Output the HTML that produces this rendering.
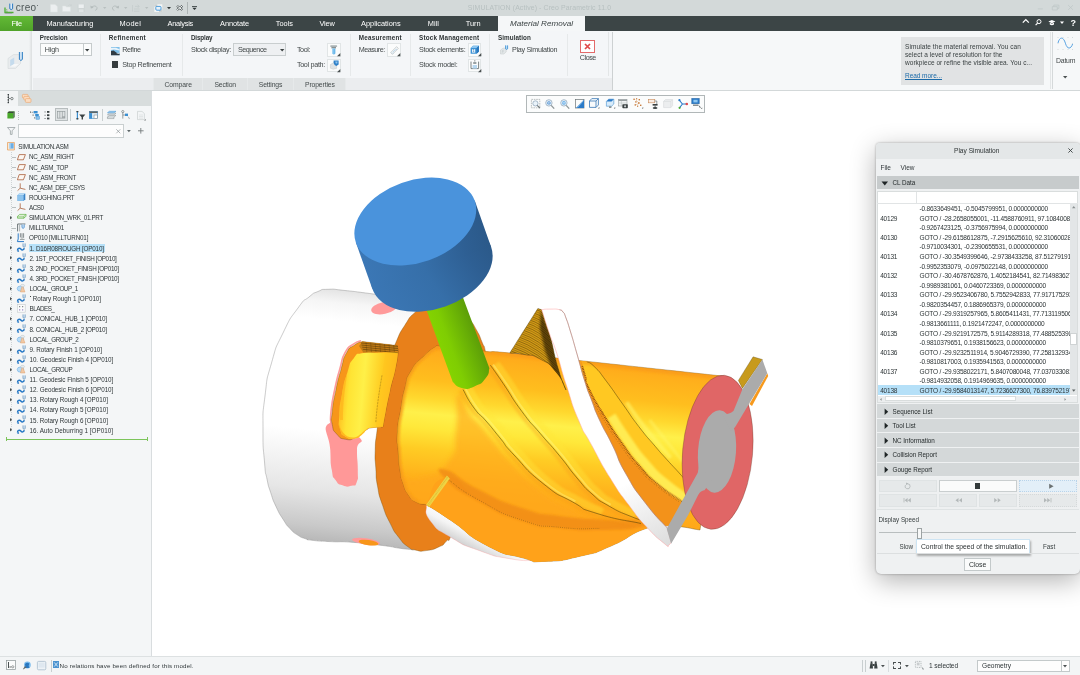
<!DOCTYPE html>
<html lang="en"><head><meta charset="utf-8"><title>Creo Parametric - SIMULATION</title>
<style>
html,body{margin:0;padding:0;}
body{width:1080px;height:675px;overflow:hidden;position:relative;background:#fff;font-family:"Liberation Sans",sans-serif;}
.t{position:absolute;white-space:nowrap;line-height:1.15;}
.r{position:absolute;box-sizing:border-box;}
svg{position:absolute;overflow:visible;}
</style></head><body>
<div id="app" style="position:absolute;left:0;top:0;width:1080px;height:675px;will-change:transform;">

<div class="r" style="left:0px;top:0px;width:1080px;height:16px;background:#d3d9d9;"></div>
<div class="t" style="left:15.8px;top:1.60px;font-size:10px;color:#4d5657;letter-spacing:0.287px;">creo</div>
<div class="t" style="left:467.8px;top:4.09px;font-size:6.9px;color:#b7c0c0;letter-spacing:0.127px;">SIMULATION (Active) - Creo Parametric 11.0</div>
<svg width="11" height="11" viewBox="0 0 11 11" style="left:3.5px;top:2.5px"><path d="M1,4.5 L1,9.5 L9.5,9.5" fill="none" stroke="#4fae35" stroke-width="1.3"/><path d="M1.2,10.3 L8,10.3" stroke="#8a9293" stroke-width="0.6"/><path d="M5.8,0.6 L5.8,5.8 Q7.2,7.4 8.6,5.8 L8.6,0.6" fill="#dbe9f5" stroke="#2a78c0" stroke-width="1"/><text x="1.8" y="8.6" font-size="4" fill="#4fae35" font-family="Liberation Sans, sans-serif">1</text></svg>
<div class="r" style="left:37px;top:5.2px;width:1.2px;height:1.2px;border-radius:1px;background:#4d5657"></div>
<svg width="8" height="8.5" viewBox="0 0 8 8.5" style="left:50px;top:3.8px"><path d="M0.5,0.4 L5,0.4 L7.4,2.6 L7.4,8 L0.5,8 Z" fill="#eceff0" stroke="#dfe4e4" stroke-width="0.5"/></svg>
<svg width="10.5" height="8" viewBox="0 0 10.5 8" style="left:62px;top:3.8px"><path d="M0.5,2 L3.6,2 L4.4,3 L8.4,3 L8.4,7.6 L0.5,7.6 Z" fill="#eceff0" stroke="#dde2e2" stroke-width="0.5"/><path d="M6,1.8 Q7.4,0.2 9.4,0.8 M9.6,0.5 L9.4,2 L8,1.3" stroke="#c9d0d0" stroke-width="0.6" fill="none"/></svg>
<svg width="8.5" height="8.5" viewBox="0 0 8.5 8.5" style="left:76.8px;top:3.8px"><path d="M0.4,0.4 L8,0.4 L8,8 L0.4,8 Z" fill="#cfd5d5"/><rect x="1.6" y="0.4" width="5.2" height="3.6" fill="#eceff0"/><rect x="1.9" y="5.4" width="4.6" height="2.6" fill="#dfe4e4"/></svg>
<svg width="8.5" height="6" viewBox="0 0 8.5 6" style="left:90px;top:5.2px"><path d="M1.2,2.4 Q5.4,-0.6 7,2.6 Q7.6,4.6 5.2,5.4" fill="none" stroke="#b3bbbb" stroke-width="0.9"/><path d="M0.4,0.6 L0.8,3.6 L3.6,2.8 Z" fill="#b3bbbb"/></svg>
<svg width="3.4" height="2" viewBox="0 0 3.4 2" style="left:103px;top:7px"><path d="M0,0 L3.4,0 L1.7,2 Z" fill="#b9c0c0"/></svg>
<svg width="8.5" height="6" viewBox="0 0 8.5 6" style="left:111px;top:5.2px"><path d="M7.3,2.4 Q3.1,-0.6 1.5,2.6 Q0.9,4.6 3.3,5.4" fill="none" stroke="#b3bbbb" stroke-width="0.9"/><path d="M8.1,0.6 L7.7,3.6 L4.9,2.8 Z" fill="#b3bbbb"/></svg>
<svg width="3.4" height="2" viewBox="0 0 3.4 2" style="left:124px;top:7px"><path d="M0,0 L3.4,0 L1.7,2 Z" fill="#b9c0c0"/></svg>
<svg width="8.5" height="8.5" viewBox="0 0 8.5 8.5" style="left:132px;top:3.5px"><g stroke="#c3caca" stroke-width="0.7" fill="none"><path d="M0.5,1 L0.5,7.5 M2,5 L7.5,5 M2,7.2 L7.5,7.2 M3,2.4 L7,2.4 M5.6,0.6 L7.2,2.4 L5.6,4"/></g></svg>
<svg width="3.4" height="2" viewBox="0 0 3.4 2" style="left:145px;top:7px"><path d="M0,0 L3.4,0 L1.7,2 Z" fill="#b9c0c0"/></svg>
<svg width="9" height="8.5" viewBox="0 0 9 8.5" style="left:153.5px;top:4px"><rect x="0.3" y="0.3" width="8" height="7.6" fill="#f4f6f6"/><rect x="0.3" y="0.3" width="3" height="2.4" fill="#c9cfcf"/><rect x="5" y="5.6" width="3.3" height="2.3" fill="#c9cfcf"/><rect x="1.8" y="2.4" width="5.2" height="3.8" rx="1" fill="#e8f2fa" stroke="#3d93d6" stroke-width="0.9"/></svg>
<svg width="4" height="2.2" viewBox="0 0 4 2.2" style="left:166.5px;top:7px"><path d="M0,0 L4,0 L2,2.2 Z" fill="#2f3738"/></svg>
<svg width="7.5" height="5.8" viewBox="0 0 7.5 5.8" style="left:176px;top:5.2px"><path d="M1,0.8 L6.4,5 M6.4,0.8 L1,5" stroke="#4a5253" stroke-width="2.1" fill="none"/><path d="M1,0.8 L6.4,5 M6.4,0.8 L1,5" stroke="#f4f6f6" stroke-width="1" fill="none"/></svg>
<div class="r" style="left:186.6px;top:1.5px;width:1px;height:12px;background:#aeb5b5"></div>
<svg width="5" height="4" viewBox="0 0 5 4" style="left:191.5px;top:5.8px"><rect x="0" y="0" width="5" height="0.8" fill="#2f3738"/><path d="M0.3,1.7 L4.7,1.7 L2.5,3.9 Z" fill="#2f3738"/></svg>
<svg width="38" height="9" viewBox="0 0 38 9" style="left:1037px;top:3px"><g stroke="#bdc5c5" stroke-width="0.7" fill="none"><path d="M0.8,5.9 L5.8,5.9"/><path d="M15.3,3.6 L20.3,3.6 L20.3,7 L15.3,7 Z M16.8,3.6 L16.8,2.1 L21.9,2.1 L21.9,5.4 L20.3,5.4"/><path d="M31.2,2.2 L36,6.8 M36,2.2 L31.2,6.8"/></g></svg>
<div class="r" style="left:0px;top:15.8px;width:1080px;height:15px;background:#3c4546;"></div>
<div class="r" style="left:0px;top:15.8px;width:33px;height:15px;background:linear-gradient(#63ba36,#4fa229);"></div>
<div class="t" style="left:11.4px;top:19.79px;font-size:7.4px;color:#fff;letter-spacing:-0.431px;">File</div>
<div class="t" style="left:46.4px;top:19.79px;font-size:7.4px;color:#fff;letter-spacing:0.008px;">Manufacturing</div>
<div class="t" style="left:119.6px;top:19.79px;font-size:7.4px;color:#fff;letter-spacing:0.289px;">Model</div>
<div class="t" style="left:167.6px;top:19.79px;font-size:7.4px;color:#fff;letter-spacing:-0.269px;">Analysis</div>
<div class="t" style="left:220px;top:19.79px;font-size:7.4px;color:#fff;letter-spacing:-0.053px;">Annotate</div>
<div class="t" style="left:275.8px;top:19.79px;font-size:7.4px;color:#fff;letter-spacing:-0.015px;">Tools</div>
<div class="t" style="left:319.4px;top:19.79px;font-size:7.4px;color:#fff;letter-spacing:-0.152px;">View</div>
<div class="t" style="left:361.1px;top:19.79px;font-size:7.4px;color:#fff;letter-spacing:-0.034px;">Applications</div>
<div class="t" style="left:427.8px;top:19.79px;font-size:7.4px;color:#fff;letter-spacing:0.001px;">Mill</div>
<div class="t" style="left:465.8px;top:19.79px;font-size:7.4px;color:#fff;letter-spacing:-0.035px;">Turn</div>
<div class="r" style="left:498px;top:15.8px;width:87px;height:15.2px;background:#f5f7f8;"></div>
<div class="t" style="left:510px;top:18.66px;font-size:8.1px;color:#3a4243;font-style:italic;letter-spacing:0.005px;">Material Removal</div>
<svg width="56" height="9" viewBox="0 0 56 9" style="left:1022px;top:18px"><g fill="none" stroke="#fff">
<path d="M0.8,4.6 L3.8,1.6 L6.8,4.6" stroke-width="1.3"/>
<circle cx="17" cy="3.6" r="2" stroke-width="1"/><path d="M15.6,5.1 L13.6,7.2" stroke-width="1.2"/>
</g><g fill="#fff"><path d="M26.4,3.6 L29.9,2 L33.4,3.6 L29.9,5.2 Z"/><path d="M27.8,4.8 L27.8,6.6 Q29.9,7.8 32,6.6 L32,4.8 L29.9,5.8 Z"/>
<path d="M38,3.4 L42,3.4 L40,6 Z"/></g>
<text x="48.6" y="7.6" font-size="9" font-weight="bold" fill="#fff" font-family="Liberation Sans, sans-serif">?</text></svg>
<div class="r" style="left:0px;top:30.8px;width:1080px;height:59.2px;background:#f4f6f8;"></div>
<div class="r" style="left:0px;top:30.8px;width:32px;height:59.2px;background:linear-gradient(90deg,#f1f3f4 0,#f1f3f4 29px,#dfe2e3 31.5px,#e9ecee 32px);"></div>
<div class="r" style="left:32.5px;top:78px;width:580px;height:12px;background:#ebedef;"></div>
<div class="r" style="left:152.5px;top:78px;width:192.5px;height:12px;background:#e0e3e4;"></div>
<div class="r" style="left:152.5px;top:78px;width:1px;height:12px;background:#e6e9ea;"></div>
<div class="r" style="left:202.0px;top:78px;width:1px;height:12px;background:#e6e9ea;"></div>
<div class="r" style="left:247.0px;top:78px;width:1px;height:12px;background:#e6e9ea;"></div>
<div class="r" style="left:293.0px;top:78px;width:1px;height:12px;background:#e6e9ea;"></div>
<div class="r" style="left:344.5px;top:78px;width:1px;height:12px;background:#e6e9ea;"></div>
<div class="r" style="left:0px;top:89.8px;width:1080px;height:1.2px;background:#d3d8d9;"></div>
<div class="t" style="left:164.4px;top:80.65px;font-size:6.8px;color:#444b4c;letter-spacing:-0.067px;">Compare</div>
<div class="t" style="left:214.4px;top:80.65px;font-size:6.8px;color:#444b4c;letter-spacing:-0.155px;">Section</div>
<div class="t" style="left:258.75px;top:80.65px;font-size:6.8px;color:#444b4c;letter-spacing:-0.134px;">Settings</div>
<div class="t" style="left:305px;top:80.65px;font-size:6.8px;color:#444b4c;letter-spacing:-0.124px;">Properties</div>
<div class="t" style="left:39.75px;top:33.76px;font-size:6.3px;color:#2d3334;font-weight:bold;letter-spacing:-0.068px;">Precision</div>
<div class="t" style="left:108.75px;top:33.76px;font-size:6.3px;color:#2d3334;font-weight:bold;letter-spacing:0.294px;">Refinement</div>
<div class="t" style="left:190.9px;top:33.76px;font-size:6.3px;color:#2d3334;font-weight:bold;letter-spacing:-0.116px;">Display</div>
<div class="t" style="left:358.75px;top:33.76px;font-size:6.3px;color:#2d3334;font-weight:bold;letter-spacing:0.226px;">Measurement</div>
<div class="t" style="left:419px;top:33.76px;font-size:6.3px;color:#2d3334;font-weight:bold;letter-spacing:0.187px;">Stock Management</div>
<div class="t" style="left:497.9px;top:33.76px;font-size:6.3px;color:#2d3334;font-weight:bold;letter-spacing:0.090px;">Simulation</div>
<div class="r" style="left:99.5px;top:34px;width:1px;height:41.5px;background:#e6e9ea;"></div>
<div class="r" style="left:182.0px;top:34px;width:1px;height:41.5px;background:#e6e9ea;"></div>
<div class="r" style="left:349.9px;top:34px;width:1px;height:41.5px;background:#e6e9ea;"></div>
<div class="r" style="left:409.75px;top:34px;width:1px;height:41.5px;background:#e6e9ea;"></div>
<div class="r" style="left:489.1px;top:34px;width:1px;height:41.5px;background:#e6e9ea;"></div>
<div class="r" style="left:567.0px;top:34px;width:1px;height:41.5px;background:#e6e9ea;"></div>
<div class="r" style="left:608.3px;top:32px;width:1px;height:44px;background:#e3e6e7;"></div>
<div class="r" style="left:612px;top:32px;width:1px;height:57.5px;background:#cdd1d2;"></div>
<div class="r" style="left:613px;top:30.8px;width:467px;height:59.2px;background:#f6f8f9;"></div>
<div class="r" style="left:40px;top:43.1px;width:52.1px;height:13.4px;background:#fbfcfc;border:1px solid #c6cbcc;"></div>
<div class="r" style="left:83px;top:43.1px;width:1px;height:13.4px;background:#c6cbcc;"></div>
<div class="t" style="left:44.75px;top:45.81px;font-size:7.2px;color:#424849;letter-spacing:-0.202px;">High</div>
<svg width="4.4" height="2.6" viewBox="0 0 4.4 2.6" style="left:85.4px;top:48.8px"><path d="M0,0 L4.4,0 L2.2,2.6 Z" fill="#3a4041"/></svg>
<div class="t" style="left:122.25px;top:45.81px;font-size:7.2px;color:#424849;letter-spacing:-0.402px;">Refine</div>
<div class="t" style="left:122.25px;top:60.81px;font-size:7.2px;color:#424849;letter-spacing:-0.292px;">Stop Refinement</div>
<div class="r" style="left:111.6px;top:61.2px;width:6.6px;height:6.4px;background:#353c3e;"></div>
<div class="t" style="left:190.9px;top:45.81px;font-size:7.2px;color:#424849;letter-spacing:-0.309px;">Stock display:</div>
<div class="r" style="left:233.1px;top:43.1px;width:53.4px;height:13.4px;background:#eef0f2;border:1px solid #c9cecf;"></div>
<div class="t" style="left:237.9px;top:45.81px;font-size:7.2px;color:#424849;letter-spacing:-0.466px;">Sequence</div>
<svg width="4.4" height="2.6" viewBox="0 0 4.4 2.6" style="left:279.8px;top:48.8px"><path d="M0,0 L4.4,0 L2.2,2.6 Z" fill="#3a4041"/></svg>
<div class="t" style="left:296.9px;top:45.81px;font-size:7.2px;color:#424849;letter-spacing:-0.422px;">Tool:</div>
<div class="t" style="left:296.9px;top:60.81px;font-size:7.2px;color:#424849;letter-spacing:-0.312px;">Tool path:</div>
<div class="t" style="left:358.75px;top:45.81px;font-size:7.2px;color:#424849;letter-spacing:-0.500px;">Measure:</div>
<div class="t" style="left:419px;top:45.81px;font-size:7.2px;color:#424849;letter-spacing:-0.322px;">Stock elements:</div>
<div class="t" style="left:419px;top:60.81px;font-size:7.2px;color:#424849;letter-spacing:-0.260px;">Stock model:</div>
<div class="t" style="left:511.9px;top:45.81px;font-size:7.2px;color:#424849;letter-spacing:-0.282px;">Play Simulation</div>
<div class="t" style="left:579.75px;top:54.11px;font-size:7.2px;color:#424849;letter-spacing:-0.442px;">Close</div>
<div class="r" style="left:327.25px;top:43.3px;width:13.3px;height:13.3px;background:#fbfcfc;border:1px solid #e1e5e6;"></div>
<svg width="3.3" height="3.3" viewBox="0 0 3.3 3.3" style="left:337.25px;top:53.3px"><path d="M3.3,0 L3.3,3.3 L0,3.3 Z" fill="#4a5051"/></svg>
<div class="r" style="left:327.25px;top:58.5px;width:13.3px;height:13.3px;background:#fbfcfc;border:1px solid #e1e5e6;"></div>
<svg width="3.3" height="3.3" viewBox="0 0 3.3 3.3" style="left:337.25px;top:68.5px"><path d="M3.3,0 L3.3,3.3 L0,3.3 Z" fill="#4a5051"/></svg>
<div class="r" style="left:387.25px;top:43.3px;width:13.3px;height:13.3px;background:#fbfcfc;border:1px solid #e1e5e6;"></div>
<svg width="3.3" height="3.3" viewBox="0 0 3.3 3.3" style="left:397.25px;top:53.3px"><path d="M3.3,0 L3.3,3.3 L0,3.3 Z" fill="#4a5051"/></svg>
<div class="r" style="left:467.6px;top:43.3px;width:13.3px;height:13.3px;background:#fbfcfc;border:1px solid #e1e5e6;"></div>
<svg width="3.3" height="3.3" viewBox="0 0 3.3 3.3" style="left:477.6px;top:53.3px"><path d="M3.3,0 L3.3,3.3 L0,3.3 Z" fill="#4a5051"/></svg>
<div class="r" style="left:467.6px;top:58.5px;width:13.3px;height:13.3px;background:#fbfcfc;border:1px solid #e1e5e6;"></div>
<svg width="3.3" height="3.3" viewBox="0 0 3.3 3.3" style="left:477.6px;top:68.5px"><path d="M3.3,0 L3.3,3.3 L0,3.3 Z" fill="#4a5051"/></svg>
<div class="r" style="left:580.25px;top:40px;width:14.75px;height:12.9px;background:#fff;border:1px solid #e36a6a;"></div>
<svg width="18" height="19" viewBox="0 0 18 19" style="left:6.5px;top:50.5px"><path d="M1,7.5 L6.5,3.6 L13.5,3.6 L13.5,12.5 L8.5,17.5 L1,17.5 Z" fill="#e9ecee" stroke="#cfd4d6" stroke-width="0.5"/>
<path d="M3.2,9 L7.2,6.4 L7.2,13 L3.2,15.2 Z" fill="#c5dbed"/><path d="M7.2,13 L11.8,13 L8.2,15.8 L3.2,15.4 Z" fill="#f7f8f9"/>
<path d="M12.4,1 L12.4,8.4 Q13.9,10.6 15.4,8.4 L15.4,1" fill="#cfe3f4" stroke="#1f74bd" stroke-width="0.9"/></svg>
<svg width="8.6" height="8.2" viewBox="0 0 8.6 8.2" style="left:111px;top:46.5px"><rect x="0" y="0" width="8.6" height="8.2" fill="#7fbfe9"/><path d="M0,0.8 L5,0.8 L8.6,2.2 L8.6,3.4 L3,2.6 L0,3 Z" fill="#eaf4fb"/><path d="M0,4 L2.6,3.6 L6,6 L8.6,6.6 L8.6,8.2 L0,8.2 Z" fill="#2f3b44"/><path d="M5,6.4 L8.6,5.4 L8.6,7 Z" fill="#c9d4db"/></svg>
<svg width="8" height="10.5" viewBox="0 0 8 10.5" style="left:330px;top:45px"><rect x="0.2" y="0.3" width="7" height="1.8" rx="0.8" fill="#aab2b4"/><rect x="1.4" y="2.1" width="4.6" height="1.3" fill="#7d8688"/><path d="M2.2,3.4 L5.4,3.4 L5.4,8.6 Q3.8,10.4 2.2,8.6 Z" fill="#6bb8ea"/><rect x="2.2" y="3.4" width="1.1" height="5.6" fill="#a8d6f4"/></svg>
<svg width="9.5" height="9.5" viewBox="0 0 9.5 9.5" style="left:329.5px;top:60.2px"><path d="M0.4,4.6 L3.4,2.8 L6.6,3.4 L6.6,8.4 L3.2,9.2 L0.4,8.2 Z" fill="#dfe3e5" stroke="#b9bfc1" stroke-width="0.4"/><path d="M3.6,0.6 L8.6,0.6 L8.6,4.4 L6.4,6 L4.6,5 L3.6,3 Z" fill="#2f80c8"/><path d="M5.2,1.4 L7.6,1.4 L7.2,3.6 L5.8,3.6 Z" fill="#8ec4ee"/></svg>
<svg width="9" height="9" viewBox="0 0 9 9" style="left:389.5px;top:45.5px"><path d="M0.6,6.6 L6.6,0.6 L8.4,2.4 L2.4,8.4 Z" fill="#f1f3f4" stroke="#a9b0b2" stroke-width="0.5"/><path d="M2,6.6 L2.8,7.4 M3.2,5.4 L4,6.2 M4.4,4.2 L5.2,5 M5.6,3 L6.4,3.8" stroke="#5aa6df" stroke-width="0.5"/></svg>
<svg width="9.5" height="9.5" viewBox="0 0 9.5 9.5" style="left:469.6px;top:45px"><path d="M0.6,3 L3,0.8 L9,0.8 L9,6.4 L6.6,8.8 L0.6,8.8 Z" fill="#3d93d6"/><path d="M0.6,3 L3,0.8 L9,0.8 L6.6,3 Z" fill="#8cc6f0"/><path d="M6.6,3 L9,0.8 L9,6.4 L6.6,8.8 Z" fill="#2a78bd"/><rect x="2" y="4.2" width="3.2" height="3.4" fill="#e8f3fb"/><text x="2.5" y="7.3" font-size="3.6" fill="#1f5f9d" font-family="Liberation Sans, sans-serif">1</text></svg>
<svg width="9.5" height="9.5" viewBox="0 0 9.5 9.5" style="left:469.6px;top:60.2px"><path d="M1,1.6 L1,8.6 L8.6,8.6 L8.6,1.6" fill="none" stroke="#6d7678" stroke-width="0.9"/><rect x="2.6" y="5" width="4.4" height="3.6" fill="#b8d8f0"/><rect x="3.2" y="2" width="3.2" height="2" fill="#9aa2a4"/><path d="M4.8,0.2 L4.8,1.6" stroke="#6d7678" stroke-width="0.8"/></svg>
<svg width="8.5" height="9.5" viewBox="0 0 8.5 9.5" style="left:500px;top:45.3px"><path d="M0.5,5 L3,3.2 L6.2,3.2 L6.2,7 L3.8,9 L0.5,9 Z" fill="#e3e7e9" stroke="#b9bfc1" stroke-width="0.4"/><path d="M1.8,5.6 L3.6,4.4 L3.6,7 L1.8,8 Z" fill="#cfd5d7"/><path d="M5.6,0.4 L5.6,3.8 Q6.6,5 7.6,3.8 L7.6,0.4" fill="#bfe0f7" stroke="#2f86cf" stroke-width="0.8"/></svg>
<svg width="7" height="7" viewBox="0 0 7 7" style="left:584.3px;top:43px"><path d="M1,1 L6,6 M6,1 L1,6" stroke="#e04a4a" stroke-width="1.7" fill="none"/></svg>
<svg width="17" height="15" viewBox="0 0 17 15" style="left:1057px;top:35.5px"><g fill="#c9d0d2"><circle cx="1" cy="1.5" r="0.5"/><circle cx="6" cy="1.5" r="0.5"/><circle cx="11" cy="1.5" r="0.5"/><circle cx="15.5" cy="1.5" r="0.5"/><circle cx="1" cy="7.5" r="0.5"/><circle cx="15.5" cy="7.5" r="0.5"/><circle cx="1" cy="13.5" r="0.5"/><circle cx="6" cy="13.5" r="0.5"/><circle cx="11" cy="13.5" r="0.5"/><circle cx="15.5" cy="13.5" r="0.5"/></g><path d="M1,7 C2.5,0.5 6.5,0.5 8.4,7.2 C10.2,13.8 14,13.2 15.6,8" fill="none" stroke="#4a9be0" stroke-width="0.9"/></svg>
<div class="r" style="left:900.9px;top:36.9px;width:143px;height:47.9px;background:#e1e3e4;"></div>
<div class="t" style="left:905px;top:42.64px;font-size:6.5px;color:#3a4142;letter-spacing:0.086px;">Simulate the material removal. You can</div>
<div class="t" style="left:905px;top:51.03px;font-size:6.5px;color:#3a4142;letter-spacing:0.069px;">select a level of resolution for the</div>
<div class="t" style="left:905px;top:59.33px;font-size:6.5px;color:#3a4142;letter-spacing:0.035px;">workpiece or refine the visible area. You c...</div>
<div class="t" style="left:905px;top:71.63px;font-size:6.5px;color:#1b6aa8;letter-spacing:-0.048px;text-decoration:underline;text-decoration-thickness:0.5px;text-underline-offset:1px;">Read more...</div>
<div class="r" style="left:1050px;top:32px;width:1px;height:57px;background:#e3e6e7;"></div>
<div class="r" style="left:1051.5px;top:32px;width:1px;height:57px;background:#d5d9da;"></div>
<div class="t" style="left:1056px;top:57.19px;font-size:6.9px;color:#424849;letter-spacing:-0.205px;">Datum</div>
<svg width="4.4" height="2.6" viewBox="0 0 4.4 2.6" style="left:1063px;top:76px"><path d="M0,0 L4.4,0 L2.2,2.6 Z" fill="#4a5051"/></svg>
<div class="r" style="left:0px;top:91px;width:152px;height:565px;background:#f4f6f7;"></div>
<div class="r" style="left:151px;top:91px;width:1px;height:565px;background:#d9dddf;"></div>
<div class="r" style="left:0px;top:91px;width:151px;height:14.5px;background:#d8dddd;"></div>
<div class="r" style="left:0px;top:91px;width:18px;height:14.5px;background:#f2f4f5;"></div>
<div class="r" style="left:18px;top:124px;width:106px;height:14.2px;background:#fdfdfd;border:1px solid #c9cfd0;"></div>
<svg width="7" height="9.5" viewBox="0 0 7 9.5" style="left:6.5px;top:93.5px"><g fill="#3a4142"><rect x="0.6" y="0" width="1.4" height="1.4"/><rect x="0.6" y="2.6" width="1.4" height="1.4"/><rect x="0.6" y="5.2" width="1.4" height="1.4"/><rect x="0.6" y="7.8" width="1.4" height="1.4"/><rect x="1" y="0" width="0.5" height="9"/><rect x="2" y="4.3" width="1.4" height="0.6"/></g><circle cx="4.9" cy="4.6" r="1.2" fill="none" stroke="#3a4142" stroke-width="0.6"/></svg>
<svg width="10" height="9.5" viewBox="0 0 10 9.5" style="left:22px;top:93.8px"><g fill="#fbdcc0" stroke="#e9a56b" stroke-width="0.6"><rect x="0.4" y="0.4" width="5.6" height="3.6" rx="0.8"/><rect x="1.8" y="2.4" width="5.6" height="3.6" rx="0.8"/><rect x="3.4" y="4.6" width="5.6" height="3.8" rx="0.8"/></g></svg>
<svg width="8" height="8" viewBox="0 0 8 8" style="left:6.8px;top:111.3px"><path d="M0.4,2 L1.8,0.6 L7.6,0.6 L7.6,6 L6.2,7.4 L0.4,7.4 Z" fill="#49a92b"/><path d="M0.4,2 L1.8,0.6 L7.6,0.6 L6.2,2 Z" fill="#3b4a3a"/><path d="M6.2,2 L7.6,0.6 L7.6,6 L6.2,7.4 Z" fill="#6a7a6a"/></svg>
<div class="r" style="left:18.3px;top:111px;width:0;height:8.5px;border-left:1px dotted #b7bdbe"></div>
<svg width="10" height="8.5" viewBox="0 0 10 8.5" style="left:30px;top:111px"><g fill="#3a4142"><rect x="0" y="0.6" width="1" height="1"/><rect x="1.6" y="0.9" width="1.6" height="0.5"/><rect x="2.6" y="3.6" width="1" height="1"/><rect x="4.2" y="6.4" width="1" height="1"/></g><rect x="3.6" y="0" width="4" height="2.4" fill="#3a8fd2"/><rect x="5.2" y="3" width="3.6" height="2.2" fill="#3a8fd2"/><rect x="6" y="5.6" width="3.4" height="2.6" fill="#8cc2ea" stroke="#3a8fd2" stroke-width="0.5"/></svg>
<svg width="6" height="8.6" viewBox="0 0 6 8.6" style="left:44px;top:110.6px"><g fill="#3a4142"><rect x="3" y="0" width="2.4" height="1.8"/><rect x="3" y="3.3" width="2.4" height="1.8"/><rect x="3" y="6.6" width="2.4" height="1.8"/><rect x="0.6" y="0.5" width="0.9" height="0.9"/><rect x="0.6" y="3.8" width="0.9" height="0.9"/><rect x="0.6" y="7" width="0.9" height="0.9"/></g></svg>
<div class="r" style="left:54.5px;top:108.3px;width:13px;height:12.8px;background:#dfe3e4;border:1px solid #b7bdbe"></div>
<svg width="8.5" height="7.5" viewBox="0 0 8.5 7.5" style="left:57px;top:111px"><g fill="none" stroke="#8d9597" stroke-width="0.6"><rect x="0.3" y="0.3" width="7.6" height="6.8"/><path d="M2.8,0.3 L2.8,7.1 M5.4,0.3 L5.4,7.1"/></g><path d="M5.6,6 L7.8,6" stroke="#6d7577" stroke-width="0.8"/></svg>
<div class="r" style="left:70.2px;top:109px;width:1px;height:12px;background:#c9cfd0"></div>
<svg width="10" height="8.6" viewBox="0 0 10 8.6" style="left:75.5px;top:110.6px"><rect x="0.8" y="0" width="1.2" height="8.4" fill="#3a8fd2"/><g fill="#3a4142"><rect x="0.4" y="0" width="2" height="1.3"/><rect x="0.4" y="7.1" width="2" height="1.3"/><path d="M3.2,3.6 L9.4,3.6 L7,6.2 L7,8.4 L5.6,8.4 L5.6,6.2 Z"/></g></svg>
<svg width="9.5" height="8.2" viewBox="0 0 9.5 8.2" style="left:89px;top:111px"><rect x="0.3" y="0.3" width="8.4" height="7.4" fill="#e6f1f9" stroke="#3a8fd2" stroke-width="0.6"/><rect x="0.3" y="0.3" width="8.4" height="1.8" fill="#5d6668"/><rect x="0.3" y="2.1" width="2.8" height="5.6" fill="#3a8fd2"/><rect x="5" y="4" width="3.4" height="3.6" fill="#fff" stroke="#6d7577" stroke-width="0.5"/></svg>
<div class="r" style="left:102.2px;top:109px;width:1px;height:12px;background:#c9cfd0"></div>
<svg width="9.5" height="8.2" viewBox="0 0 9.5 8.2" style="left:107px;top:111px"><g fill="#eef3f6" stroke="#7d8587" stroke-width="0.5"><path d="M0.4,6 L2.4,4.4 L9,4.4 L7,6 Z M0.4,6 L0.4,7.6 L7,7.6 L7,6"/><path d="M0.4,3.8 L2.4,2.2 L9,2.2 L7,3.8 Z"/></g><path d="M0.4,1.8 L2.4,0.3 L9,0.3 L7,1.8 Z" fill="#9fd0f2" stroke="#3a8fd2" stroke-width="0.5"/></svg>
<svg width="10" height="9.5" viewBox="0 0 10 9.5" style="left:121px;top:110px"><g fill="none" stroke="#5d6668" stroke-width="0.6"><circle cx="1.8" cy="1.6" r="1.1"/><path d="M1.8,2.7 L1.8,8.6 M1.8,5 L4,5"/></g><rect x="4" y="3.6" width="3" height="2.4" fill="#3a8fd2"/><path d="M6,5.4 L9,8.4 L7.8,8.6 L7.4,7.2 Z" fill="#6d7577"/></svg>
<svg width="9" height="9.5" viewBox="0 0 9 9.5" style="left:137px;top:110.5px"><path d="M0.5,0.4 L5,0.4 L7.4,2.6 L7.4,8.6 L0.5,8.6 Z" fill="#f3f5f6" stroke="#c3c9ca" stroke-width="0.6"/><path d="M2,4 L6,4 M2,5.6 L6,5.6 M2,7.2 L6,7.2" stroke="#cfd4d5" stroke-width="0.5"/><path d="M8.6,8 L8.6,9.4 L7.2,9.4 Z" fill="#4a5051"/></svg>
<svg width="8.5" height="8" viewBox="0 0 8.5 8" style="left:7px;top:127.3px"><path d="M0.5,0.5 L8,0.5 L5.1,3.8 L5.1,7.4 L3.4,7.4 L3.4,3.8 Z" fill="none" stroke="#8d9597" stroke-width="0.7"/></svg>
<svg width="4.6" height="4.6" viewBox="0 0 4.6 4.6" style="left:115.7px;top:129px"><path d="M0.3,0.3 L4.3,4.3 M4.3,0.3 L0.3,4.3" stroke="#8d9597" stroke-width="0.7"/></svg>
<svg width="3.8" height="2.2" viewBox="0 0 3.8 2.2" style="left:127.3px;top:129.8px"><path d="M0,0 L3.8,0 L1.9,2.2 Z" fill="#5d6668"/></svg>
<svg width="5.6" height="5.6" viewBox="0 0 5.6 5.6" style="left:138.3px;top:128.3px"><path d="M2.8,0 L2.8,5.6 M0,2.8 L5.6,2.8" stroke="#747b7c" stroke-width="0.9"/></svg>
<div class="t" style="left:18.2px;top:143.36px;font-size:6.3px;color:#2f3638;letter-spacing:-0.210px;">SIMULATION.ASM</div>
<div class="t" style="left:29px;top:153.48px;font-size:6.3px;color:#2f3638;letter-spacing:-0.372px;">NC_ASM_RIGHT</div>
<div class="t" style="left:29px;top:163.60px;font-size:6.3px;color:#2f3638;letter-spacing:-0.360px;">NC_ASM_TOP</div>
<div class="t" style="left:29px;top:173.72px;font-size:6.3px;color:#2f3638;letter-spacing:-0.371px;">NC_ASM_FRONT</div>
<div class="t" style="left:29px;top:183.84px;font-size:6.3px;color:#2f3638;letter-spacing:-0.500px;">NC_ASM_DEF_CSYS</div>
<div class="t" style="left:29px;top:193.96px;font-size:6.3px;color:#2f3638;letter-spacing:-0.291px;">ROUGHING.PRT</div>
<div class="t" style="left:29px;top:204.08px;font-size:6.3px;color:#2f3638;letter-spacing:-0.465px;">ACS0</div>
<div class="t" style="left:29px;top:214.20px;font-size:6.3px;color:#2f3638;letter-spacing:-0.333px;">SIMULATION_WRK_01.PRT</div>
<div class="t" style="left:29px;top:224.32px;font-size:6.3px;color:#2f3638;letter-spacing:-0.304px;">MILLTURN01</div>
<div class="t" style="left:29px;top:234.44px;font-size:6.3px;color:#2f3638;letter-spacing:-0.206px;">OP010 [MILLTURN01]</div>
<div class="r" style="left:28.8px;top:243.7px;width:76.2px;height:8.6px;background:#b5e0f8;"></div>
<div class="t" style="left:29.5px;top:244.56px;font-size:6.3px;color:#2f3638;letter-spacing:-0.188px;">1. D16R08ROUGH [OP010]</div>
<div class="t" style="left:29.5px;top:254.68px;font-size:6.3px;color:#2f3638;letter-spacing:-0.357px;">2. 1ST_POCKET_FINISH [OP010]</div>
<div class="t" style="left:29.5px;top:264.80px;font-size:6.3px;color:#2f3638;letter-spacing:-0.312px;">3. 2ND_POCKET_FINISH [OP010]</div>
<div class="t" style="left:29.5px;top:274.92px;font-size:6.3px;color:#2f3638;letter-spacing:-0.312px;">4. 3RD_POCKET_FINISH [OP010]</div>
<div class="t" style="left:29.5px;top:285.04px;font-size:6.3px;color:#2f3638;letter-spacing:-0.460px;">LOCAL_GROUP_1</div>
<div class="t" style="left:32.7px;top:295.16px;font-size:6.3px;color:#2f3638;letter-spacing:-0.027px;">Rotary Rough 1 [OP010]</div>
<div class="t" style="left:29.5px;top:305.28px;font-size:6.3px;color:#2f3638;letter-spacing:-0.500px;">BLADES_</div>
<div class="t" style="left:29.5px;top:315.40px;font-size:6.3px;color:#2f3638;letter-spacing:-0.270px;">7. CONICAL_HUB_1 [OP010]</div>
<div class="t" style="left:29.5px;top:325.52px;font-size:6.3px;color:#2f3638;letter-spacing:-0.270px;">8. CONICAL_HUB_2 [OP010]</div>
<div class="t" style="left:29.5px;top:335.64px;font-size:6.3px;color:#2f3638;letter-spacing:-0.413px;">LOCAL_GROUP_2</div>
<div class="t" style="left:29.5px;top:345.76px;font-size:6.3px;color:#2f3638;letter-spacing:-0.067px;">9. Rotary Finish 1 [OP010]</div>
<div class="t" style="left:29.5px;top:355.88px;font-size:6.3px;color:#2f3638;letter-spacing:-0.072px;">10. Geodesic Finish 4 [OP010]</div>
<div class="t" style="left:29.5px;top:366.00px;font-size:6.3px;color:#2f3638;letter-spacing:-0.415px;">LOCAL_GROUP</div>
<div class="t" style="left:29.5px;top:376.12px;font-size:6.3px;color:#2f3638;letter-spacing:-0.056px;">11. Geodesic Finish 5 [OP010]</div>
<div class="t" style="left:29.5px;top:386.24px;font-size:6.3px;color:#2f3638;letter-spacing:-0.072px;">12. Geodesic Finish 6 [OP010]</div>
<div class="t" style="left:29.5px;top:396.36px;font-size:6.3px;color:#2f3638;letter-spacing:-0.042px;">13. Rotary Rough 4 [OP010]</div>
<div class="t" style="left:29.5px;top:406.48px;font-size:6.3px;color:#2f3638;letter-spacing:-0.042px;">14. Rotary Rough 5 [OP010]</div>
<div class="t" style="left:29.5px;top:416.60px;font-size:6.3px;color:#2f3638;letter-spacing:-0.042px;">15. Rotary Rough 6 [OP010]</div>
<div class="t" style="left:29.5px;top:426.72px;font-size:6.3px;color:#2f3638;letter-spacing:0.037px;">16. Auto Deburring 1 [OP010]</div>
<div class="r" style="left:6.2px;top:438.6px;width:141.5px;height:1px;background:#7cc45a;"></div>
<div class="r" style="left:6.2px;top:437.4px;width:1px;height:3.4px;background:#7cc45a;"></div>
<div class="r" style="left:146.7px;top:437.4px;width:1px;height:3.4px;background:#7cc45a;"></div>
<div class="r" style="left:10.8px;top:151.7px;width:0;height:279.4px;border-left:1px dotted #cfd4d5"></div>
<svg width="8" height="8.6" viewBox="0 0 8 8.6" style="left:6.8px;top:142.29999999999998px"><path d="M0.5,0.5 L7.4,0.5 L7.4,8 L0.5,8 Z" fill="#fbe9d6" stroke="#e39a55" stroke-width="0.7"/><path d="M2.4,1.2 L6.6,1.2 L6.6,6.6 L2.4,6.6 Z" fill="#6aaee6"/><path d="M2.4,1.2 L3.6,1.2 L3.6,6.6 L2.4,6.6 Z" fill="#b9dcf6"/></svg>
<svg width="9" height="6.5" viewBox="0 0 9 6.5" style="left:17.3px;top:153.62px"><path d="M2.2,0.6 L8.4,0.6 L6.4,5.8 L0.4,5.8 Z" fill="#fbf6f1" stroke="#a5562f" stroke-width="0.75"/></svg>
<div class="r" style="left:11.5px;top:156.8px;width:4px;height:1px;background:#b9bfc0"></div>
<svg width="9" height="6.5" viewBox="0 0 9 6.5" style="left:17.3px;top:163.74px"><path d="M2.2,0.6 L8.4,0.6 L6.4,5.8 L0.4,5.8 Z" fill="#fbf6f1" stroke="#a5562f" stroke-width="0.75"/></svg>
<div class="r" style="left:11.5px;top:166.9px;width:4px;height:1px;background:#b9bfc0"></div>
<svg width="9" height="6.5" viewBox="0 0 9 6.5" style="left:17.3px;top:173.86px"><path d="M2.2,0.6 L8.4,0.6 L6.4,5.8 L0.4,5.8 Z" fill="#fbf6f1" stroke="#a5562f" stroke-width="0.75"/></svg>
<div class="r" style="left:11.5px;top:177.1px;width:4px;height:1px;background:#b9bfc0"></div>
<svg width="9" height="8" viewBox="0 0 9 8" style="left:17px;top:182.98px"><path d="M3.2,0.3 L3.2,5.2 L8.4,6.4 M3.2,5.2 L0.6,7.6" fill="none" stroke="#a5562f" stroke-width="0.75"/></svg>
<div class="r" style="left:11.5px;top:187.2px;width:4px;height:1px;background:#b9bfc0"></div>
<svg width="9.2" height="9" viewBox="0 0 9.2 9" style="left:17.2px;top:192.99999999999997px"><path d="M0.5,2.2 L2.2,0.5 L8.2,0.5 L8.2,6.2 L6.5,7.9 L0.5,7.9 Z" fill="#5ea6e2"/><path d="M0.5,2.2 L2.2,0.5 L8.2,0.5 L6.5,2.2 Z" fill="#b9dcf6"/><path d="M6.5,2.2 L8.2,0.5 L8.2,6.2 L6.5,7.9 Z" fill="#3b82c4"/><rect x="0.5" y="2.2" width="6" height="5.7" fill="#8ec4ee"/></svg>
<svg width="2.2" height="3.4" viewBox="0 0 2.2 3.4" style="left:9.8px;top:195.7px"><path d="M0,0 L2.1,1.7 L0,3.4 Z" fill="#4a5051"/></svg>
<svg width="9" height="8" viewBox="0 0 9 8" style="left:17px;top:203.22px"><path d="M3.2,0.3 L3.2,5.2 L8.4,6.4 M3.2,5.2 L0.6,7.6" fill="none" stroke="#a5562f" stroke-width="0.75"/></svg>
<div class="r" style="left:11.5px;top:207.4px;width:4px;height:1px;background:#b9bfc0"></div>
<svg width="9.2" height="9" viewBox="0 0 9.2 9" style="left:17.2px;top:213.23999999999995px"><path d="M0.5,3.4 L2.6,1.4 L9,1.4 L7,3.4 Z" fill="#e9f5e4" stroke="#4aa82c" stroke-width="0.6"/><path d="M0.5,3.4 L0.5,5.2 L7,5.2 L7,3.4 M7,5.2 L9,3.2 L9,1.4" fill="#cfeac4" stroke="#4aa82c" stroke-width="0.6"/></svg>
<svg width="2.2" height="3.4" viewBox="0 0 2.2 3.4" style="left:9.8px;top:215.93999999999997px"><path d="M0,0 L2.1,1.7 L0,3.4 Z" fill="#4a5051"/></svg>
<svg width="9.2" height="9" viewBox="0 0 9.2 9" style="left:17.2px;top:223.35999999999996px"><path d="M0.6,1 L0.6,8.4 M0.6,1 L8.4,1" fill="none" stroke="#6d7678" stroke-width="1"/><path d="M2.6,2 L2.6,8.4" stroke="#9aa2a4" stroke-width="0.8"/><path d="M5,1.6 L5,4.6 Q6.1,6.2 7.2,4.6 L7.2,1.6" fill="#d4e7f6" stroke="#2a7ac8" stroke-width="0.7"/></svg>
<div class="r" style="left:11.5px;top:227.7px;width:4px;height:1px;background:#b9bfc0"></div>
<svg width="9.2" height="9" viewBox="0 0 9.2 9" style="left:17.2px;top:233.47999999999996px"><path d="M1.2,0.4 L1.2,6 L0.4,8.6 L7,8.6" fill="none" stroke="#2a7ac8" stroke-width="1"/><path d="M3.4,0.2 L3.4,4.4 M5,0.2 L5,5.6 M6.6,0.2 L6.6,4.8" stroke="#7d8587" stroke-width="0.9"/><path d="M3,6.4 L7.6,6.4" stroke="#7d8587" stroke-width="0.8"/></svg>
<svg width="2.2" height="3.4" viewBox="0 0 2.2 3.4" style="left:9.8px;top:236.17999999999998px"><path d="M0,0 L2.1,1.7 L0,3.4 Z" fill="#4a5051"/></svg>
<svg width="9" height="9.4" viewBox="0 0 9 9.4" style="left:17.4px;top:243.29999999999998px"><path d="M0.6,7.6 C0.2,5.2 2.6,4.6 3.8,6 C5,7.4 7,7.2 7.2,5.2" fill="none" stroke="#2577c4" stroke-width="1.5"/><path d="M0.2,8.8 L1.2,6.6 L2.2,8.8 Z" fill="#2577c4"/><path d="M6,0.4 L6,3.6 Q7.1,5 8.2,3.6 L8.2,0.4" fill="#d4e7f6" stroke="#5b89b3" stroke-width="0.7"/></svg>
<svg width="2.2" height="3.4" viewBox="0 0 2.2 3.4" style="left:9.8px;top:246.29999999999998px"><path d="M0,0 L2.1,1.7 L0,3.4 Z" fill="#4a5051"/></svg>
<svg width="9" height="9.4" viewBox="0 0 9 9.4" style="left:17.4px;top:253.42px"><path d="M0.6,7.6 C0.2,5.2 2.6,4.6 3.8,6 C5,7.4 7,7.2 7.2,5.2" fill="none" stroke="#2577c4" stroke-width="1.5"/><path d="M0.2,8.8 L1.2,6.6 L2.2,8.8 Z" fill="#2577c4"/><path d="M6,0.4 L6,3.6 Q7.1,5 8.2,3.6 L8.2,0.4" fill="#d4e7f6" stroke="#5b89b3" stroke-width="0.7"/></svg>
<svg width="2.2" height="3.4" viewBox="0 0 2.2 3.4" style="left:9.8px;top:256.41999999999996px"><path d="M0,0 L2.1,1.7 L0,3.4 Z" fill="#4a5051"/></svg>
<svg width="9" height="9.4" viewBox="0 0 9 9.4" style="left:17.4px;top:263.53999999999996px"><path d="M0.6,7.6 C0.2,5.2 2.6,4.6 3.8,6 C5,7.4 7,7.2 7.2,5.2" fill="none" stroke="#2577c4" stroke-width="1.5"/><path d="M0.2,8.8 L1.2,6.6 L2.2,8.8 Z" fill="#2577c4"/><path d="M6,0.4 L6,3.6 Q7.1,5 8.2,3.6 L8.2,0.4" fill="#d4e7f6" stroke="#5b89b3" stroke-width="0.7"/></svg>
<svg width="2.2" height="3.4" viewBox="0 0 2.2 3.4" style="left:9.8px;top:266.53999999999996px"><path d="M0,0 L2.1,1.7 L0,3.4 Z" fill="#4a5051"/></svg>
<svg width="9" height="9.4" viewBox="0 0 9 9.4" style="left:17.4px;top:273.65999999999997px"><path d="M0.6,7.6 C0.2,5.2 2.6,4.6 3.8,6 C5,7.4 7,7.2 7.2,5.2" fill="none" stroke="#2577c4" stroke-width="1.5"/><path d="M0.2,8.8 L1.2,6.6 L2.2,8.8 Z" fill="#2577c4"/><path d="M6,0.4 L6,3.6 Q7.1,5 8.2,3.6 L8.2,0.4" fill="#d4e7f6" stroke="#5b89b3" stroke-width="0.7"/></svg>
<svg width="2.2" height="3.4" viewBox="0 0 2.2 3.4" style="left:9.8px;top:276.65999999999997px"><path d="M0,0 L2.1,1.7 L0,3.4 Z" fill="#4a5051"/></svg>
<svg width="9.2" height="9" viewBox="0 0 9.2 9" style="left:17.2px;top:284.08px"><ellipse cx="3.4" cy="4.6" rx="3.2" ry="2.6" fill="#b9dcf6" stroke="#5ea6e2" stroke-width="0.5"/><path d="M5.4,1 L8,8 L3.4,8 Z" fill="#f2c9a4" stroke="#d9965e" stroke-width="0.4"/><ellipse cx="5.6" cy="1.6" rx="2" ry="1.2" fill="#e9eef2" stroke="#aab2b5" stroke-width="0.4"/></svg>
<svg width="2.2" height="3.4" viewBox="0 0 2.2 3.4" style="left:9.8px;top:286.78px"><path d="M0,0 L2.1,1.7 L0,3.4 Z" fill="#4a5051"/></svg>
<svg width="9" height="9.4" viewBox="0 0 9 9.4" style="left:17.4px;top:293.9px"><path d="M0.6,7.6 C0.2,5.2 2.6,4.6 3.8,6 C5,7.4 7,7.2 7.2,5.2" fill="none" stroke="#2577c4" stroke-width="1.5"/><path d="M0.2,8.8 L1.2,6.6 L2.2,8.8 Z" fill="#2577c4"/><path d="M6,0.4 L6,3.6 Q7.1,5 8.2,3.6 L8.2,0.4" fill="#d4e7f6" stroke="#5b89b3" stroke-width="0.7"/></svg>
<svg width="2.2" height="3.4" viewBox="0 0 2.2 3.4" style="left:9.8px;top:296.9px"><path d="M0,0 L2.1,1.7 L0,3.4 Z" fill="#4a5051"/></svg>
<svg width="9.2" height="9" viewBox="0 0 9.2 9" style="left:17.2px;top:304.32px"><rect x="0.4" y="0.4" width="7.8" height="7.8" fill="#fbfcfc" stroke="#c3c9ca" stroke-width="0.6"/><g fill="#4a5051"><rect x="2.2" y="2.2" width="1" height="1"/><rect x="5.2" y="2.2" width="1" height="1"/></g><g fill="#6a4aa8"><rect x="2.2" y="5.4" width="1" height="1"/><rect x="5.2" y="5.4" width="1" height="1"/></g></svg>
<svg width="2.2" height="3.4" viewBox="0 0 2.2 3.4" style="left:9.8px;top:307.02px"><path d="M0,0 L2.1,1.7 L0,3.4 Z" fill="#4a5051"/></svg>
<svg width="9" height="9.4" viewBox="0 0 9 9.4" style="left:17.4px;top:314.14px"><path d="M0.6,7.6 C0.2,5.2 2.6,4.6 3.8,6 C5,7.4 7,7.2 7.2,5.2" fill="none" stroke="#2577c4" stroke-width="1.5"/><path d="M0.2,8.8 L1.2,6.6 L2.2,8.8 Z" fill="#2577c4"/><path d="M6,0.4 L6,3.6 Q7.1,5 8.2,3.6 L8.2,0.4" fill="#d4e7f6" stroke="#5b89b3" stroke-width="0.7"/></svg>
<svg width="2.2" height="3.4" viewBox="0 0 2.2 3.4" style="left:9.8px;top:317.14px"><path d="M0,0 L2.1,1.7 L0,3.4 Z" fill="#4a5051"/></svg>
<svg width="9" height="9.4" viewBox="0 0 9 9.4" style="left:17.4px;top:324.26px"><path d="M0.6,7.6 C0.2,5.2 2.6,4.6 3.8,6 C5,7.4 7,7.2 7.2,5.2" fill="none" stroke="#2577c4" stroke-width="1.5"/><path d="M0.2,8.8 L1.2,6.6 L2.2,8.8 Z" fill="#2577c4"/><path d="M6,0.4 L6,3.6 Q7.1,5 8.2,3.6 L8.2,0.4" fill="#d4e7f6" stroke="#5b89b3" stroke-width="0.7"/></svg>
<svg width="2.2" height="3.4" viewBox="0 0 2.2 3.4" style="left:9.8px;top:327.26px"><path d="M0,0 L2.1,1.7 L0,3.4 Z" fill="#4a5051"/></svg>
<svg width="9.2" height="9" viewBox="0 0 9.2 9" style="left:17.2px;top:334.67999999999995px"><ellipse cx="3.4" cy="4.6" rx="3.2" ry="2.6" fill="#b9dcf6" stroke="#5ea6e2" stroke-width="0.5"/><path d="M5.4,1 L8,8 L3.4,8 Z" fill="#f2c9a4" stroke="#d9965e" stroke-width="0.4"/><ellipse cx="5.6" cy="1.6" rx="2" ry="1.2" fill="#e9eef2" stroke="#aab2b5" stroke-width="0.4"/></svg>
<svg width="2.2" height="3.4" viewBox="0 0 2.2 3.4" style="left:9.8px;top:337.37999999999994px"><path d="M0,0 L2.1,1.7 L0,3.4 Z" fill="#4a5051"/></svg>
<svg width="9" height="9.4" viewBox="0 0 9 9.4" style="left:17.4px;top:344.49999999999994px"><path d="M0.6,7.6 C0.2,5.2 2.6,4.6 3.8,6 C5,7.4 7,7.2 7.2,5.2" fill="none" stroke="#2577c4" stroke-width="1.5"/><path d="M0.2,8.8 L1.2,6.6 L2.2,8.8 Z" fill="#2577c4"/><path d="M6,0.4 L6,3.6 Q7.1,5 8.2,3.6 L8.2,0.4" fill="#d4e7f6" stroke="#5b89b3" stroke-width="0.7"/></svg>
<svg width="2.2" height="3.4" viewBox="0 0 2.2 3.4" style="left:9.8px;top:347.49999999999994px"><path d="M0,0 L2.1,1.7 L0,3.4 Z" fill="#4a5051"/></svg>
<svg width="9" height="9.4" viewBox="0 0 9 9.4" style="left:17.4px;top:354.61999999999995px"><path d="M0.6,7.6 C0.2,5.2 2.6,4.6 3.8,6 C5,7.4 7,7.2 7.2,5.2" fill="none" stroke="#2577c4" stroke-width="1.5"/><path d="M0.2,8.8 L1.2,6.6 L2.2,8.8 Z" fill="#2577c4"/><path d="M6,0.4 L6,3.6 Q7.1,5 8.2,3.6 L8.2,0.4" fill="#d4e7f6" stroke="#5b89b3" stroke-width="0.7"/></svg>
<svg width="2.2" height="3.4" viewBox="0 0 2.2 3.4" style="left:9.8px;top:357.61999999999995px"><path d="M0,0 L2.1,1.7 L0,3.4 Z" fill="#4a5051"/></svg>
<svg width="9.2" height="9" viewBox="0 0 9.2 9" style="left:17.2px;top:365.03999999999996px"><ellipse cx="3.4" cy="4.6" rx="3.2" ry="2.6" fill="#b9dcf6" stroke="#5ea6e2" stroke-width="0.5"/><path d="M5.4,1 L8,8 L3.4,8 Z" fill="#f2c9a4" stroke="#d9965e" stroke-width="0.4"/><ellipse cx="5.6" cy="1.6" rx="2" ry="1.2" fill="#e9eef2" stroke="#aab2b5" stroke-width="0.4"/></svg>
<svg width="2.2" height="3.4" viewBox="0 0 2.2 3.4" style="left:9.8px;top:367.73999999999995px"><path d="M0,0 L2.1,1.7 L0,3.4 Z" fill="#4a5051"/></svg>
<svg width="9" height="9.4" viewBox="0 0 9 9.4" style="left:17.4px;top:374.85999999999996px"><path d="M0.6,7.6 C0.2,5.2 2.6,4.6 3.8,6 C5,7.4 7,7.2 7.2,5.2" fill="none" stroke="#2577c4" stroke-width="1.5"/><path d="M0.2,8.8 L1.2,6.6 L2.2,8.8 Z" fill="#2577c4"/><path d="M6,0.4 L6,3.6 Q7.1,5 8.2,3.6 L8.2,0.4" fill="#d4e7f6" stroke="#5b89b3" stroke-width="0.7"/></svg>
<svg width="2.2" height="3.4" viewBox="0 0 2.2 3.4" style="left:9.8px;top:377.85999999999996px"><path d="M0,0 L2.1,1.7 L0,3.4 Z" fill="#4a5051"/></svg>
<svg width="9" height="9.4" viewBox="0 0 9 9.4" style="left:17.4px;top:384.97999999999996px"><path d="M0.6,7.6 C0.2,5.2 2.6,4.6 3.8,6 C5,7.4 7,7.2 7.2,5.2" fill="none" stroke="#2577c4" stroke-width="1.5"/><path d="M0.2,8.8 L1.2,6.6 L2.2,8.8 Z" fill="#2577c4"/><path d="M6,0.4 L6,3.6 Q7.1,5 8.2,3.6 L8.2,0.4" fill="#d4e7f6" stroke="#5b89b3" stroke-width="0.7"/></svg>
<svg width="2.2" height="3.4" viewBox="0 0 2.2 3.4" style="left:9.8px;top:387.97999999999996px"><path d="M0,0 L2.1,1.7 L0,3.4 Z" fill="#4a5051"/></svg>
<svg width="9" height="9.4" viewBox="0 0 9 9.4" style="left:17.4px;top:395.0999999999999px"><path d="M0.6,7.6 C0.2,5.2 2.6,4.6 3.8,6 C5,7.4 7,7.2 7.2,5.2" fill="none" stroke="#2577c4" stroke-width="1.5"/><path d="M0.2,8.8 L1.2,6.6 L2.2,8.8 Z" fill="#2577c4"/><path d="M6,0.4 L6,3.6 Q7.1,5 8.2,3.6 L8.2,0.4" fill="#d4e7f6" stroke="#5b89b3" stroke-width="0.7"/></svg>
<svg width="2.2" height="3.4" viewBox="0 0 2.2 3.4" style="left:9.8px;top:398.0999999999999px"><path d="M0,0 L2.1,1.7 L0,3.4 Z" fill="#4a5051"/></svg>
<svg width="9" height="9.4" viewBox="0 0 9 9.4" style="left:17.4px;top:405.21999999999997px"><path d="M0.6,7.6 C0.2,5.2 2.6,4.6 3.8,6 C5,7.4 7,7.2 7.2,5.2" fill="none" stroke="#2577c4" stroke-width="1.5"/><path d="M0.2,8.8 L1.2,6.6 L2.2,8.8 Z" fill="#2577c4"/><path d="M6,0.4 L6,3.6 Q7.1,5 8.2,3.6 L8.2,0.4" fill="#d4e7f6" stroke="#5b89b3" stroke-width="0.7"/></svg>
<svg width="2.2" height="3.4" viewBox="0 0 2.2 3.4" style="left:9.8px;top:408.21999999999997px"><path d="M0,0 L2.1,1.7 L0,3.4 Z" fill="#4a5051"/></svg>
<svg width="9" height="9.4" viewBox="0 0 9 9.4" style="left:17.4px;top:415.3399999999999px"><path d="M0.6,7.6 C0.2,5.2 2.6,4.6 3.8,6 C5,7.4 7,7.2 7.2,5.2" fill="none" stroke="#2577c4" stroke-width="1.5"/><path d="M0.2,8.8 L1.2,6.6 L2.2,8.8 Z" fill="#2577c4"/><path d="M6,0.4 L6,3.6 Q7.1,5 8.2,3.6 L8.2,0.4" fill="#d4e7f6" stroke="#5b89b3" stroke-width="0.7"/></svg>
<svg width="2.2" height="3.4" viewBox="0 0 2.2 3.4" style="left:9.8px;top:418.3399999999999px"><path d="M0,0 L2.1,1.7 L0,3.4 Z" fill="#4a5051"/></svg>
<svg width="9" height="9.4" viewBox="0 0 9 9.4" style="left:17.4px;top:425.4599999999999px"><path d="M0.6,7.6 C0.2,5.2 2.6,4.6 3.8,6 C5,7.4 7,7.2 7.2,5.2" fill="none" stroke="#2577c4" stroke-width="1.5"/><path d="M0.2,8.8 L1.2,6.6 L2.2,8.8 Z" fill="#2577c4"/><path d="M6,0.4 L6,3.6 Q7.1,5 8.2,3.6 L8.2,0.4" fill="#d4e7f6" stroke="#5b89b3" stroke-width="0.7"/></svg>
<svg width="2.2" height="3.4" viewBox="0 0 2.2 3.4" style="left:9.8px;top:428.4599999999999px"><path d="M0,0 L2.1,1.7 L0,3.4 Z" fill="#4a5051"/></svg>
<div class="r" style="left:29.6px;top:295.5px;width:1.8px;height:1.8px;background:#3a4142"></div>
<div class="r" style="left:0px;top:656.3px;width:1080px;height:18.7px;background:#f3f5f6;"></div>
<div class="r" style="left:0px;top:655.6px;width:1080px;height:1px;background:#dde1e2;"></div>
<div class="t" style="left:59.5px;top:662.02px;font-size:6.2px;color:#2f3638;letter-spacing:0.174px;">No relations have been defined for this model.</div>
<div class="t" style="left:929px;top:661.77px;font-size:6.6px;color:#2f3638;letter-spacing:-0.109px;">1 selected</div>
<div class="r" style="left:977px;top:659.7px;width:93px;height:12.6px;background:#fdfdfd;border:1px solid #c3c9ca;"></div>
<div class="r" style="left:1060.5px;top:659.7px;width:1px;height:12.6px;background:#c3c9ca;"></div>
<div class="t" style="left:982px;top:661.77px;font-size:6.6px;color:#2f3638;letter-spacing:0.003px;">Geometry</div>
<svg width="4" height="2.4" viewBox="0 0 4 2.4" style="left:1063.3px;top:664.8px"><path d="M0,0 L4,0 L2,2.4 Z" fill="#4a5051"/></svg>
<svg width="10" height="10" viewBox="0 0 10 10" style="left:5.5px;top:660.3px"><rect x="0.4" y="0.4" width="9" height="9" fill="#fbfcfc" stroke="#8d9597" stroke-width="0.7"/><g fill="#4a5051"><rect x="2" y="2" width="1" height="6"/><rect x="3.4" y="6.6" width="2" height="0.8"/></g><circle cx="6.8" cy="6.8" r="1.1" fill="none" stroke="#4a5051" stroke-width="0.5"/></svg>
<svg width="9.5" height="9.5" viewBox="0 0 9.5 9.5" style="left:21.5px;top:660.5px"><circle cx="5.4" cy="4" r="3.4" fill="#7dbdee"/><path d="M3,3 Q5,0.8 7.4,2.6 Q6,5 7.6,6.4 Q5,7.8 3.4,6.2 Z" fill="#2a78c0"/><path d="M0.6,8.8 L3,5 L4.4,6.4 Z" fill="#5d6668"/></svg>
<svg width="9.5" height="9.5" viewBox="0 0 9.5 9.5" style="left:37.3px;top:660.6px"><rect x="0.4" y="0.4" width="8.4" height="8.4" rx="1.2" fill="#eef3f7" stroke="#9fb4c6" stroke-width="0.7"/><rect x="1.6" y="1.6" width="6" height="5" fill="#dfe8f0"/></svg>
<div class="r" style="left:50.8px;top:660px;width:1px;height:12px;background:#c9cfd0"></div>
<svg width="6.5" height="7.2" viewBox="0 0 6.5 7.2" style="left:53.2px;top:661.2px"><rect x="0" y="0" width="6" height="7" fill="#4b93cf"/><path d="M1.2,1.4 L4.8,5.6 M4.8,1.4 L1.2,5.6" stroke="#e9f3fb" stroke-width="0.8"/></svg>
<div class="r" style="left:862.4px;top:660px;width:1px;height:12px;background:#c9cfd0"></div><div class="r" style="left:864.6px;top:660px;width:1px;height:12px;background:#c9cfd0"></div>
<svg width="9.5" height="8.5" viewBox="0 0 9.5 8.5" style="left:868.5px;top:661.3px"><g fill="#3a4142"><path d="M1.4,2.4 L3.6,2.4 L4,7.6 L0.6,7.6 Z"/><path d="M5.6,2.4 L7.8,2.4 L8.6,7.6 L5.2,7.6 Z"/><rect x="1.6" y="0.4" width="1.8" height="2.4"/><rect x="5.8" y="0.4" width="1.8" height="2.4"/><rect x="3.6" y="3" width="2" height="2"/></g></svg>
<svg width="3.8" height="2.2" viewBox="0 0 3.8 2.2" style="left:881px;top:664.6px"><path d="M0,0 L3.8,0 L1.9,2.2 Z" fill="#4a5051"/></svg>
<div class="r" style="left:888.3px;top:660px;width:1px;height:12px;background:#d9dddf"></div>
<div class="r" style="left:892.6px;top:662.2px;width:8.2px;height:6.6px;border:1px dashed #4a5051"></div>
<svg width="3.8" height="2.2" viewBox="0 0 3.8 2.2" style="left:905.3px;top:664.6px"><path d="M0,0 L3.8,0 L1.9,2.2 Z" fill="#4a5051"/></svg>
<svg width="9.5" height="9" viewBox="0 0 9.5 9" style="left:914.5px;top:661px"><g fill="none" stroke="#8d9597" stroke-width="0.6"><path d="M0.4,0.4 L6,0.4 L6,6.4 L0.4,6.4 Z" stroke-dasharray="1 0.8"/><path d="M1.8,2.2 L4.6,2.2 M1.8,3.8 L4.6,3.8"/></g><path d="M6.4,5.4 L9,8.2 L7.8,8.4 L7.4,7.2 Z" fill="#5d6668"/></svg>
<svg width="1080" height="675" viewBox="0 0 1080 675" style="left:0;top:0">
<defs>
<linearGradient id="gStock" gradientUnits="userSpaceOnUse" x1="330" y1="289" x2="305" y2="545">
 <stop offset="0" stop-color="#e4e4e4"/><stop offset="0.05" stop-color="#f6f6f6"/><stop offset="0.12" stop-color="#ffffff"/><stop offset="0.55" stop-color="#ffffff"/><stop offset="0.78" stop-color="#e6e6e6"/><stop offset="0.92" stop-color="#c9c9c9"/><stop offset="1" stop-color="#b2b2b2"/>
</linearGradient>
<linearGradient id="gBlueSide" gradientUnits="userSpaceOnUse" x1="365" y1="270" x2="490" y2="240">
 <stop offset="0" stop-color="#3b77b5"/><stop offset="0.45" stop-color="#366fa9"/><stop offset="0.8" stop-color="#2e5f93"/><stop offset="1" stop-color="#2b5989"/>
</linearGradient>
<linearGradient id="gGreen" gradientUnits="userSpaceOnUse" x1="436" y1="352" x2="478" y2="336">
 <stop offset="0" stop-color="#86d600"/><stop offset="0.35" stop-color="#7fcd02"/><stop offset="0.75" stop-color="#69b006"/><stop offset="1" stop-color="#5c9d08"/>
</linearGradient>
<linearGradient id="gBody" gradientUnits="userSpaceOnUse" x1="560" y1="357" x2="540" y2="565">
 <stop offset="0" stop-color="#ffa61a"/><stop offset="0.06" stop-color="#ffb01c"/><stop offset="0.17" stop-color="#ffbe1e"/><stop offset="0.26" stop-color="#ffd82e"/><stop offset="0.33" stop-color="#fff04a"/><stop offset="0.40" stop-color="#ffe83a"/><stop offset="0.50" stop-color="#ffcc24"/><stop offset="0.62" stop-color="#ffb41c"/><stop offset="0.8" stop-color="#ffa418"/><stop offset="1" stop-color="#ff9b15"/>
</linearGradient>
<linearGradient id="gEar" gradientUnits="userSpaceOnUse" x1="338" y1="395" x2="392" y2="400">
 <stop offset="0" stop-color="#ffb81e"/><stop offset="0.2" stop-color="#ffe434"/><stop offset="0.45" stop-color="#fff048"/><stop offset="0.75" stop-color="#ffcf24"/><stop offset="1" stop-color="#ffb01c"/>
</linearGradient>
<linearGradient id="gSliver" gradientUnits="userSpaceOnUse" x1="484" y1="530" x2="470" y2="557">
 <stop offset="0" stop-color="#ffffff"/><stop offset="0.35" stop-color="#f4f4f4"/><stop offset="0.7" stop-color="#d6d6d6"/><stop offset="1" stop-color="#b0b0b0"/>
</linearGradient>
<linearGradient id="gBlade" gradientUnits="userSpaceOnUse" x1="560" y1="320" x2="680" y2="540">
 <stop offset="0" stop-color="#ffffff"/><stop offset="0.7" stop-color="#ffffff"/><stop offset="1" stop-color="#dcdcdc"/>
</linearGradient>
<filter id="b1" x="-20%" y="-20%" width="140%" height="140%"><feGaussianBlur stdDeviation="1.2"/></filter><filter id="b2" x="-20%" y="-20%" width="140%" height="140%"><feGaussianBlur stdDeviation="2.5"/></filter><filter id="b05" x="-20%" y="-20%" width="140%" height="140%"><feGaussianBlur stdDeviation="0.6"/></filter>
</defs>
<path d="M420.0,300.0C404.7,298.0 398.5,297.2 373.5,294.0C348.5,290.8 360.2,292.1 345.0,290.5C329.8,288.9 337.0,289.0 328.0,289.3C319.0,289.6 324.3,288.9 318.0,291.5C311.7,294.1 315.7,291.5 309.0,297.0C302.3,302.5 306.7,296.0 298.0,308.0C289.3,320.0 291.8,314.7 283.0,333.0C274.2,351.3 277.5,342.0 271.5,363.0C265.5,384.0 267.8,373.7 265.0,396.0C262.2,418.3 263.1,407.7 263.0,430.0C262.9,452.3 263.3,446.7 264.6,463.0C265.9,479.3 265.0,469.1 267.0,479.0C269.0,488.9 267.7,483.4 270.7,492.6C273.7,501.8 271.8,497.5 276.0,506.5C280.2,515.5 278.5,512.1 283.2,519.5C287.9,526.9 285.2,523.4 290.0,528.6C294.8,533.8 292.7,531.8 297.7,535.1C302.7,538.4 300.2,536.9 305.0,538.6C309.8,540.3 303.9,539.3 312.2,540.3C320.5,541.3 316.2,540.9 330.0,541.6C343.8,542.3 336.1,541.1 353.7,542.4C371.3,543.7 367.3,543.5 382.7,545.5C398.1,547.5 389.9,546.9 400.0,548.3C410.1,549.7 408.7,549.3 413.0,549.8C416.6,548.5 420.4,547.3 424.0,546.0C429.3,507.7 434.7,468.3 440.0,430.0C433.4,387.1 426.6,342.9 420.0,300.0Z" fill="url(#gStock)" stroke="#8e8e8e" stroke-width="0.45"/>
<ellipse cx="384" cy="308" rx="13" ry="6" transform="rotate(-12 384 308)" fill="#ff9a9a"/>
<path d="M329.8,423.0C320.6,427.7 329.6,434.3 330.3,450.0C331.0,465.7 330.1,460.0 331.8,470.0C333.5,480.0 331.9,474.9 335.5,480.0C339.1,485.1 337.2,483.4 342.5,485.3C347.8,487.2 346.7,486.9 351.5,485.8C356.3,484.7 354.7,487.3 356.8,482.0C358.9,476.7 357.7,480.7 357.8,470.0C357.9,459.3 356.9,461.3 357.0,450.0C357.1,438.7 367.1,445.0 358.0,436.0C348.9,427.0 339.0,418.3 329.8,423.0Z" fill="#ff9898"/>
<ellipse cx="366" cy="541.5" rx="14" ry="3.2" transform="rotate(8 366 541.5)" fill="#ff9a9a"/>
<ellipse cx="368.5" cy="542.6" rx="10" ry="2.6" transform="rotate(8 368.5 542.6)" fill="#f7961a"/>
<path d="M441.0,302.0C433.7,302.2 436.5,301.2 428.0,304.5C419.5,307.8 423.2,305.1 415.5,312.0C407.8,318.9 411.2,315.4 404.8,325.3C398.4,335.2 401.0,330.9 396.2,341.8C391.4,352.7 393.5,348.6 390.5,358.0C387.5,367.4 389.0,361.7 387.2,370.0C385.4,378.3 387.1,371.3 385.0,383.0C382.9,394.7 383.7,389.0 381.0,405.0C378.3,421.0 378.9,416.0 377.0,431.0C375.1,446.0 375.6,437.7 375.2,450.0C374.8,462.3 375.0,456.0 375.8,468.0C376.6,480.0 375.3,473.7 377.5,486.0C379.7,498.3 378.3,492.7 382.5,505.0C386.7,517.3 384.7,512.3 390.0,523.0C395.3,533.7 392.5,529.1 398.5,537.0C404.5,544.9 402.2,542.4 408.0,546.8C413.8,551.2 409.9,548.9 416.0,550.2C422.1,551.5 418.6,551.7 426.2,550.6C433.8,549.5 432.1,550.0 438.7,547.0C445.3,544.0 441.6,546.2 446.0,541.5C450.4,536.8 446.7,546.8 452.0,533.0C457.3,519.2 452.7,531.0 462.0,500.0C471.3,469.0 470.7,480.0 480.0,440.0C489.3,400.0 488.0,408.7 490.0,380.0C492.0,351.3 488.7,366.7 486.0,354.0C483.3,341.3 485.2,350.0 482.0,342.0C478.8,334.0 480.8,337.7 476.5,330.0C472.2,322.3 474.8,326.0 469.0,319.0C463.2,312.0 465.3,314.0 459.0,309.0C452.7,304.0 456.0,306.3 450.0,304.0C444.0,301.7 448.3,301.8 441.0,302.0Z" fill="#e8801a" stroke="#6b4a10" stroke-width="0.35"/>
<path d="M361.0,340.6C358.5,341.8 358.7,340.2 353.4,344.1C348.1,348.0 349.7,344.2 345.2,352.4C340.7,360.6 343.4,356.1 339.9,368.6C336.4,381.1 337.6,375.7 334.6,390.0C331.6,404.3 332.2,400.1 331.0,411.6C329.8,423.1 331.0,420.2 331.0,424.4" fill="none" stroke="#ff9a9a" stroke-width="1.6"/>
<path d="M362.4,341.6C359.8,342.8 359.7,341.3 354.4,345.1C349.1,348.9 350.8,345.1 346.4,353.1C342.0,361.1 344.6,356.7 341.1,369.1C337.6,381.5 338.8,376.2 335.8,390.4C332.8,404.6 333.4,400.5 332.2,411.8C331.0,423.1 330.7,416.8 332.2,424.2C333.7,431.6 332.2,429.0 336.7,434.0C341.2,439.0 339.4,438.1 345.6,439.3C351.8,440.5 350.0,439.7 355.3,437.6C360.6,435.5 357.7,435.8 361.6,433.1C365.5,430.4 363.7,431.4 366.9,429.6C370.1,427.8 366.0,428.7 371.3,427.8C376.6,426.9 379.1,427.2 382.9,426.9C383.8,421.9 383.2,424.0 385.6,411.8C388.0,399.6 386.8,404.6 390.0,390.4C393.2,376.2 392.5,382.1 395.3,369.1C398.1,356.1 397.4,357.2 398.4,351.3C398.0,349.4 397.5,347.5 397.1,345.6C391.5,344.9 391.6,344.9 380.0,343.6C368.4,342.3 368.2,342.3 362.4,341.6Z" fill="#f7961a" stroke="#5b4210" stroke-width="0.35"/>
<path d="M363.3,353.1C372.1,351.2 368.4,352.9 380.0,352.6C391.6,352.3 392.1,352.3 398.0,352.2C397.1,357.8 398.0,356.4 395.3,369.1C392.6,381.8 393.2,376.2 390.0,390.4C386.8,404.6 388.0,399.6 385.6,411.8C383.2,424.0 383.8,421.9 382.9,426.9C379.1,427.2 376.6,426.9 371.3,427.8C366.0,428.7 370.1,427.2 366.9,429.6C363.7,432.0 365.8,432.0 361.6,434.9C357.4,437.8 359.7,437.8 354.4,438.4C349.1,439.0 350.3,439.6 345.6,436.7C340.9,433.8 342.3,436.7 340.2,429.6C338.1,422.5 338.7,427.2 339.3,415.3C339.9,403.4 339.3,408.2 342.0,394.0C344.7,379.8 343.4,384.6 347.3,372.7C351.2,360.8 348.3,364.9 353.6,358.4C358.9,351.9 354.5,355.0 363.3,353.1Z" fill="url(#gEar)"/>
<clipPath id="cEar"><path d="M363.3,353.1C372.1,351.2 368.4,352.9 380.0,352.6C391.6,352.3 392.1,352.3 398.0,352.2C397.1,357.8 398.0,356.4 395.3,369.1C392.6,381.8 393.2,376.2 390.0,390.4C386.8,404.6 388.0,399.6 385.6,411.8C383.2,424.0 383.8,421.9 382.9,426.9C379.1,427.2 376.6,426.9 371.3,427.8C366.0,428.7 370.1,427.2 366.9,429.6C363.7,432.0 365.8,432.0 361.6,434.9C357.4,437.8 359.7,437.8 354.4,438.4C349.1,439.0 350.3,439.6 345.6,436.7C340.9,433.8 342.3,436.7 340.2,429.6C338.1,422.5 338.7,427.2 339.3,415.3C339.9,403.4 339.3,408.2 342.0,394.0C344.7,379.8 343.4,384.6 347.3,372.7C351.2,360.8 348.3,364.9 353.6,358.4C358.9,351.9 354.5,355.0 363.3,353.1Z"/></clipPath>
<g clip-path="url(#cEar)">
<path d="M382,375.3 C379,392 376.8,408 375.8,422.4 L377,440 L402,440 L402,350 L386,350 Z" fill="#ffc41e" opacity="0.55"/>
<path d="M338,420 C340,432 346,438 354,437.5 C360,436.5 364,430 368,428 L384,426 L384,442 L336,442 Z" fill="#ffb01c" opacity="0.8" filter="url(#b05)"/>
<path d="M346,372 C343,390 341,405 341.5,420" fill="none" stroke="#ffb41c" stroke-width="3" opacity="0.7" filter="url(#b05)"/>
</g>
<path d="M382,375.3 C379,392 376.8,408 375.8,422.4" stroke="#7a5c10" stroke-width="0.4" stroke-dasharray="2.2 0.8" fill="none"/>
<path d="M362.4,341.6C373.9,342.9 385.6,344.3 397.1,345.6C397.5,347.6 398.0,349.6 398.4,351.6C392.3,351.8 391.7,351.9 380.0,352.2C368.3,352.5 368.8,352.5 363.3,352.6C361.9,350.4 360.4,348.2 359.0,346.0C360.1,344.5 361.3,343.1 362.4,341.6Z" fill="#c27c16"/>
<path d="M361.0,343.0 L398,346.4" stroke="#2a1e06" stroke-width="0.4" fill="none"/>
<path d="M361.6,345.1 L398,348.5" stroke="#2a1e06" stroke-width="0.4" fill="none"/>
<path d="M362.2,347.2 L398,350.6" stroke="#2a1e06" stroke-width="0.4" fill="none"/>
<path d="M362.8,349.3 L398,352.7" stroke="#2a1e06" stroke-width="0.4" fill="none"/>
<path d="M366.0,342.0 L366.8,352.0" stroke="#2a1e06" stroke-width="0.3" fill="none" opacity="0.7"/>
<path d="M370.6,342.5 L371.4,352.0" stroke="#2a1e06" stroke-width="0.3" fill="none" opacity="0.7"/>
<path d="M375.2,343.0 L376.0,352.0" stroke="#2a1e06" stroke-width="0.3" fill="none" opacity="0.7"/>
<path d="M379.8,343.5 L380.6,352.0" stroke="#2a1e06" stroke-width="0.3" fill="none" opacity="0.7"/>
<path d="M384.4,344.0 L385.2,352.0" stroke="#2a1e06" stroke-width="0.3" fill="none" opacity="0.7"/>
<path d="M389.0,344.5 L389.8,352.0" stroke="#2a1e06" stroke-width="0.3" fill="none" opacity="0.7"/>
<path d="M393.6,345.0 L394.4,352.0" stroke="#2a1e06" stroke-width="0.3" fill="none" opacity="0.7"/>
<path d="M426.2,505.4C427.7,510.7 422.4,510.7 430.7,521.4C439.0,532.1 434.7,527.6 451.0,537.4C467.3,547.2 460.0,543.6 479.6,550.7C499.2,557.8 491.3,555.4 509.8,558.7C528.3,562.0 526.7,559.9 535.0,560.5C523.5,553.7 525.0,553.5 500.0,540.0C475.0,526.5 484.6,531.5 460.0,520.0C435.4,508.5 437.4,510.2 426.2,505.4Z" fill="url(#gSliver)" stroke="#ff8a8a" stroke-width="0.3"/>
<path d="M436.5,346.0C432.4,349.3 432.5,347.7 424.0,356.0C415.5,364.3 417.3,360.3 411.0,371.0C404.7,381.7 408.3,375.5 405.0,388.0C401.7,400.5 403.5,393.8 401.0,408.5C398.5,423.2 398.4,417.5 397.5,432.0C396.6,446.5 397.5,439.3 398.3,452.0C399.1,464.7 398.4,459.7 400.0,470.0C401.6,480.3 400.2,474.7 403.0,483.0C405.8,491.3 404.2,488.7 408.5,495.0C412.8,501.3 410.1,498.8 416.0,502.0C421.9,505.2 422.8,503.7 426.2,504.5C434.4,509.8 430.8,506.9 451.0,520.5C471.2,534.1 462.9,533.0 486.7,545.4C510.5,557.8 502.9,552.5 522.3,557.8C541.7,563.1 525.4,562.0 545.0,561.4C564.6,560.8 559.0,561.1 581.0,556.0C603.0,550.9 589.3,555.2 611.0,546.0C632.7,536.8 626.7,535.2 646.0,528.5C665.3,521.8 651.0,525.5 669.0,526.0C687.0,526.5 689.8,528.7 700.0,530.0C707.3,479.2 714.7,426.8 722.0,376.0C713.8,375.1 744.0,378.4 697.0,373.3C650.0,368.2 643.4,367.5 581.0,360.7C518.6,353.9 541.9,356.1 509.8,353.0C477.7,349.9 501.4,353.0 484.8,351.3C468.2,349.6 476.1,349.8 460.0,348.0C443.9,346.2 444.3,346.7 436.5,346.0Z" fill="url(#gBody)" stroke="#5b4210" stroke-width="0.35"/>
<clipPath id="cBody"><path d="M436.5,346.0C432.4,349.3 432.5,347.7 424.0,356.0C415.5,364.3 417.3,360.3 411.0,371.0C404.7,381.7 408.3,375.5 405.0,388.0C401.7,400.5 403.5,393.8 401.0,408.5C398.5,423.2 398.4,417.5 397.5,432.0C396.6,446.5 397.5,439.3 398.3,452.0C399.1,464.7 398.4,459.7 400.0,470.0C401.6,480.3 400.2,474.7 403.0,483.0C405.8,491.3 404.2,488.7 408.5,495.0C412.8,501.3 410.1,498.8 416.0,502.0C421.9,505.2 422.8,503.7 426.2,504.5C434.4,509.8 430.8,506.9 451.0,520.5C471.2,534.1 462.9,533.0 486.7,545.4C510.5,557.8 502.9,552.5 522.3,557.8C541.7,563.1 525.4,562.0 545.0,561.4C564.6,560.8 559.0,561.1 581.0,556.0C603.0,550.9 589.3,555.2 611.0,546.0C632.7,536.8 626.7,535.2 646.0,528.5C665.3,521.8 651.0,525.5 669.0,526.0C687.0,526.5 689.8,528.7 700.0,530.0C707.3,479.2 714.7,426.8 722.0,376.0C713.8,375.1 744.0,378.4 697.0,373.3C650.0,368.2 643.4,367.5 581.0,360.7C518.6,353.9 541.9,356.1 509.8,353.0C477.7,349.9 501.4,353.0 484.8,351.3C468.2,349.6 476.1,349.8 460.0,348.0C443.9,346.2 444.3,346.7 436.5,346.0Z"/></clipPath>
<g clip-path="url(#cBody)">
<path d="M580.8,360.7C582.7,361.0 584.8,361.2 586.7,361.5C589.4,363.4 588.4,360.7 594.9,367.2C601.4,373.7 597.1,368.9 606.3,381.1C615.5,393.3 611.7,388.7 622.6,403.9C633.5,419.1 628.0,412.6 638.9,426.7C649.8,440.8 646.0,435.4 655.2,446.3C664.4,457.2 657.8,449.5 666.6,459.3C675.4,469.1 673.7,466.7 681.5,475.6C689.3,484.5 687.2,482.6 690.0,486.0C690.0,494.6 690.0,503.4 690.0,512.0C682.4,517.6 674.6,523.4 667.0,529.0C659.9,520.4 659.1,521.3 645.4,503.0C631.7,484.7 637.0,493.3 626.0,474.0C615.0,454.7 621.1,463.0 612.3,445.0C603.5,427.0 606.4,435.0 599.5,420.0C592.6,405.0 596.3,412.7 591.5,400.0C586.7,387.3 588.6,395.1 585.0,382.0C581.4,368.9 582.2,367.7 580.8,360.7Z" fill="#ffc822"/>
<path d="M580.8,360.7C581.5,362.4 581.3,360.9 583.0,366.0C584.7,371.1 583.7,368.3 586.0,376.0C588.3,383.7 583.3,375.3 590.0,389.0C596.7,402.7 595.0,399.0 606.0,417.0C617.0,435.0 611.7,427.0 623.0,443.0C634.3,459.0 628.3,451.7 640.0,465.0C651.7,478.3 643.7,471.0 658.0,483.0C672.3,495.0 672.3,491.3 683.0,501.0C693.7,510.7 687.7,508.4 690.0,512.0C682.4,517.6 674.6,523.4 667.0,529.0C659.9,520.4 659.1,521.3 645.4,503.0C631.7,484.7 637.0,493.3 626.0,474.0C615.0,454.7 621.1,463.0 612.3,445.0C603.5,427.0 606.4,435.0 599.5,420.0C592.6,405.0 596.3,412.7 591.5,400.0C586.7,387.3 588.6,395.1 585.0,382.0C581.4,368.9 582.2,367.7 580.8,360.7Z" fill="#f3921a"/>
<path d="M458.0,394.5C462.3,388.8 461.3,402.5 469.0,413.0C476.7,423.5 472.3,416.0 481.0,426.0C489.7,436.0 485.7,431.7 495.0,443.0C504.3,454.3 494.7,444.8 509.0,460.0C523.3,475.2 518.4,472.8 538.0,488.5C557.6,504.2 549.7,497.0 567.7,507.0C585.7,517.0 569.2,511.3 592.0,518.5C614.8,525.7 613.3,523.7 636.0,528.5C658.7,533.3 652.1,531.5 660.0,533.0C660.0,545.2 660.0,557.8 660.0,570.0C597.3,570.0 532.7,570.0 470.0,570.0C441.9,556.8 413.1,543.2 385.0,530.0C386.0,513.5 376.3,497.3 388.0,480.0C399.7,462.7 400.0,484.0 420.0,478.0C440.0,472.0 436.0,478.0 448.0,462.0C460.0,446.0 452.7,452.5 456.0,430.0C459.3,407.5 453.7,400.2 458.0,394.5Z" fill="#ffa61b" opacity="0.62" filter="url(#b2)"/>
<path d="M446.7,477.8C464.5,476.0 454.4,485.4 479.6,499.0C504.8,512.6 495.5,509.8 522.3,518.7C549.1,527.6 534.1,523.0 560.0,525.8C585.9,528.6 573.3,527.6 600.0,527.0C626.7,526.4 620.0,518.0 640.0,524.0C660.0,530.0 653.4,538.1 660.0,545.0C622.0,554.9 583.0,565.1 545.0,575.0C503.8,556.9 461.2,538.1 420.0,520.0C422.0,514.9 424.2,509.6 426.2,504.5C433.0,495.7 428.9,479.6 446.7,477.8Z" fill="#ffa21a"/>
<path d="M446.7,470.0C457.7,473.3 454.4,477.3 479.6,490.0C504.8,502.7 495.5,499.3 522.3,508.0C549.1,516.7 530.8,512.0 560.0,516.0C589.2,520.0 583.3,518.3 610.0,520.0C636.7,521.7 630.0,518.7 640.0,521.0C650.0,523.3 653.3,524.0 640.0,527.0C626.7,530.0 626.7,529.7 600.0,530.0C573.3,530.3 585.9,531.0 560.0,528.0C534.1,525.0 549.1,529.7 522.3,521.0C495.5,512.3 504.8,515.7 479.6,502.0C454.4,488.3 457.7,490.7 446.7,480.0C435.7,469.3 435.7,466.7 446.7,470.0Z" fill="#ee8812" opacity="0.7" filter="url(#b1)"/>
<path d="M440.0,344.0C434.7,348.0 433.7,347.0 424.0,356.0C414.3,365.0 417.3,360.3 411.0,371.0C404.7,381.7 408.3,375.5 405.0,388.0C401.7,400.5 403.5,393.8 401.0,408.5C398.5,423.2 398.4,417.5 397.5,432.0C396.6,446.5 397.5,439.3 398.3,452.0C399.1,464.7 398.4,459.7 400.0,470.0C401.6,480.3 400.2,474.7 403.0,483.0C405.8,491.3 403.5,488.0 408.5,495.0C413.5,502.0 414.9,501.0 418.0,504.0" fill="none" stroke="#f79a1a" stroke-width="5" opacity="0.8" filter="url(#b1)"/>
<path d="M436,347 L520,355 L600,364 L720,377" fill="none" stroke="#f7961a" stroke-width="5" opacity="0.55" filter="url(#b1)"/>
<path d="M468.5,388.0C472.1,394.1 471.8,396.0 479.5,406.5C487.2,417.0 482.8,409.5 491.5,419.5C500.2,429.5 496.2,425.2 505.5,436.5C514.8,447.8 505.2,438.3 519.5,453.5C533.8,468.7 528.9,466.3 548.5,482.0C568.1,497.7 560.2,490.5 578.2,500.5C596.2,510.5 594.5,508.2 602.5,512.0" fill="none" stroke="#ffe63a" stroke-width="8" opacity="0.4" filter="url(#b1)"/>
<path d="M495.9,363.7C500.2,369.8 498.3,366.8 508.8,382.2C519.3,397.6 515.0,393.3 527.4,410.0C539.8,426.7 533.6,417.7 545.9,432.2C558.2,446.7 552.2,438.7 564.4,453.5C576.6,468.3 571.5,463.5 582.5,476.5C593.5,489.5 587.2,483.3 597.5,492.5C607.8,501.7 600.5,496.5 613.5,504.0C626.5,511.5 628.9,511.4 636.5,515.0" fill="none" stroke="#ffe63a" stroke-width="8" opacity="0.4" filter="url(#b1)"/>
<path d="M465.6,389.0C469.2,395.1 468.9,397.0 476.6,407.5C484.3,418.0 479.9,410.5 488.6,420.5C497.3,430.5 493.3,426.2 502.6,437.5C511.9,448.8 502.3,439.3 516.6,454.5C530.9,469.7 526.0,467.3 545.6,483.0C565.2,498.7 565.5,495.4 575.3,501.5" fill="none" stroke="#fffa8a" stroke-width="2.2" opacity="0.4" filter="url(#b05)"/>
<path d="M493.0,364.7C497.3,370.8 495.4,367.8 505.9,383.2C516.4,398.6 512.1,394.3 524.5,411.0C536.9,427.7 530.7,418.7 543.0,433.2C555.3,447.7 549.3,439.7 561.5,454.5C573.7,469.3 568.6,464.5 579.6,477.5C590.6,490.5 584.3,484.3 594.6,493.5C604.9,502.7 605.3,501.2 610.6,505.0" fill="none" stroke="#fffa8a" stroke-width="2.2" opacity="0.4" filter="url(#b05)"/>
<path d="M460.5,390.3C464.1,396.4 463.8,398.3 471.5,408.8C479.2,419.3 474.8,411.8 483.5,421.8C492.2,431.8 488.2,427.5 497.5,438.8C506.8,450.1 497.2,440.6 511.5,455.8C525.8,471.0 520.9,468.6 540.5,484.3C560.1,500.0 552.2,492.8 570.2,502.8C588.2,512.8 571.7,507.1 594.5,514.3C617.3,521.5 624.0,521.0 638.5,524.3" fill="none" stroke="#f7981a" stroke-width="4" opacity="0.33" filter="url(#b1)"/>
<path d="M487.9,366.0C492.2,372.1 490.3,369.1 500.8,384.5C511.3,399.9 507.0,395.6 519.4,412.3C531.8,429.0 525.6,420.0 537.9,434.5C550.2,449.0 544.2,441.0 556.4,455.8C568.6,470.6 563.5,465.8 574.5,478.8C585.5,491.8 579.2,485.6 589.5,494.8C599.8,504.0 592.5,498.8 605.5,506.3C618.5,513.8 615.8,512.1 628.5,517.3C641.2,522.5 638.5,520.3 643.5,521.8" fill="none" stroke="#f7981a" stroke-width="4" opacity="0.33" filter="url(#b1)"/>
<path d="M463.0,389.5C466.6,395.6 466.3,397.5 474.0,408.0C481.7,418.5 477.3,411.0 486.0,421.0C494.7,431.0 490.7,426.7 500.0,438.0C509.3,449.3 499.7,439.8 514.0,455.0C528.3,470.2 523.4,467.8 543.0,483.5C562.6,499.2 554.7,492.0 572.7,502.0C590.7,512.0 574.2,506.3 597.0,513.5C619.8,520.7 626.5,520.2 641.0,523.5" fill="none" stroke="#4a3a08" stroke-width="0.55"/>
<path d="M490.4,365.2C494.7,371.3 492.8,368.3 503.3,383.7C513.8,399.1 509.5,394.8 521.9,411.5C534.3,428.2 528.1,419.2 540.4,433.7C552.7,448.2 546.7,440.2 558.9,455.0C571.1,469.8 566.0,465.0 577.0,478.0C588.0,491.0 581.7,484.8 592.0,494.0C602.3,503.2 595.0,498.0 608.0,505.5C621.0,513.0 618.3,511.3 631.0,516.5C643.7,521.7 641.0,519.5 646.0,521.0" fill="none" stroke="#4a3a08" stroke-width="0.55"/>
<path d="M582.2,366.5C583.2,369.8 582.9,368.8 585.2,376.5C587.5,384.2 582.5,375.8 589.2,389.5C595.9,403.2 594.2,399.5 605.2,417.5C616.2,435.5 610.9,427.5 622.2,443.5C633.5,459.5 627.5,452.2 639.2,465.5C650.9,478.8 642.9,471.5 657.2,483.5C671.5,495.5 674.0,495.6 682.2,501.5" fill="none" stroke="#3a2806" stroke-width="1.9" stroke-dasharray="0.5 1.1" opacity="0.85"/>
<path d="M580.0,367.5C581.0,370.8 580.7,369.8 583.0,377.5C585.3,385.2 580.3,376.8 587.0,390.5C593.7,404.2 592.0,400.5 603.0,418.5C614.0,436.5 608.7,428.5 620.0,444.5C631.3,460.5 625.3,453.2 637.0,466.5C648.7,479.8 640.7,472.5 655.0,484.5C669.3,496.5 671.8,496.6 680.0,502.5" fill="none" stroke="#4a3508" stroke-width="1" stroke-dasharray="0.4 1.7" opacity="0.6"/>
<path d="M448.0,479.5C458.4,486.4 454.8,486.9 479.6,500.5C504.4,514.1 495.5,511.3 522.3,520.2C549.1,529.1 534.1,524.5 560.0,527.3C585.9,530.1 586.8,528.1 600.0,528.5" fill="none" stroke="#6a5010" stroke-width="0.9" stroke-dasharray="0.6 1.5" opacity="0.7"/>
<path d="M611.5,416.0C617.1,424.6 617.2,426.0 628.5,442.0C639.8,458.0 633.8,450.7 645.5,464.0C657.2,477.3 649.2,470.0 663.5,482.0C677.8,494.0 680.2,494.1 688.5,500.0" fill="none" stroke="#fff45e" stroke-width="9" opacity="0.8" filter="url(#b1)"/>
<path d="M626.6,402.4C632.0,409.9 632.0,411.1 642.9,425.2C653.8,439.3 650.0,433.9 659.2,444.8C668.4,455.7 666.8,453.5 670.6,457.8" fill="none" stroke="#fff66a" stroke-width="4" opacity="0.6" filter="url(#b1)"/>
<path d="M649.6,420.0C655.1,426.8 655.1,426.9 666.2,440.7C677.3,454.5 677.3,454.6 682.8,461.5" fill="none" stroke="#fff66a" stroke-width="3" opacity="0.45" filter="url(#b1)"/>
<path d="M586.7,361.5C589.4,363.4 588.4,360.7 594.9,367.2C601.4,373.7 597.1,368.9 606.3,381.1C615.5,393.3 611.7,388.7 622.6,403.9C633.5,419.1 628.0,412.6 638.9,426.7C649.8,440.8 646.0,435.4 655.2,446.3C664.4,457.2 657.8,449.5 666.6,459.3C675.4,469.1 673.7,466.7 681.5,475.6C689.3,484.5 687.2,482.6 690.0,486.0" fill="none" stroke="#4a3a08" stroke-width="0.5"/>
</g>
<path d="M446.9,475.6 L449.8,478.6 L429,507.2 L426.2,504.8 Z" fill="#f0d444" stroke="none"/>
<path d="M447.5,477 L428,505.5" stroke="#7a6410" stroke-width="1.6" stroke-dasharray="0.4 0.9" opacity="0.3" fill="none"/>
<path d="M509.8,353.0C513.3,347.5 513.6,347.0 520.3,336.3C527.0,325.6 524.2,330.2 530.0,321.0C535.8,311.8 535.2,312.7 537.8,308.6C539.1,309.0 540.4,309.4 541.7,309.8C544.2,317.5 543.8,313.5 549.3,333.0C554.8,352.5 552.5,349.2 558.1,368.2C563.7,387.2 563.4,382.8 566.0,390.0C562.7,384.1 564.7,382.3 556.0,372.0C547.3,361.7 550.7,364.8 540.0,359.0C529.3,353.2 534.1,356.5 524.0,354.5C513.9,352.5 514.5,353.5 509.8,353.0Z" fill="#d29a16" stroke="#2a1e06" stroke-width="0.35"/>
<clipPath id="cTri"><path d="M509.8,353.0C513.3,347.5 513.6,347.0 520.3,336.3C527.0,325.6 524.2,330.2 530.0,321.0C535.8,311.8 535.2,312.7 537.8,308.6C539.1,309.0 540.4,309.4 541.7,309.8C544.2,317.5 543.8,313.5 549.3,333.0C554.8,352.5 552.5,349.2 558.1,368.2C563.7,387.2 563.4,382.8 566.0,390.0C562.7,384.1 564.7,382.3 556.0,372.0C547.3,361.7 550.7,364.8 540.0,359.0C529.3,353.2 534.1,356.5 524.0,354.5C513.9,352.5 514.5,353.5 509.8,353.0Z"/></clipPath>
<g clip-path="url(#cTri)" stroke="#1a1204" stroke-width="0.42" fill="none">
<path d="M510.4,352.8 Q536.2,361.4 566.0,390.0" opacity="0.55"/>
<path d="M511.5,351.1 Q536.3,359.4 565.1,386.9" opacity="0.85"/>
<path d="M512.5,349.4 Q536.5,357.3 564.1,383.8" opacity="0.55"/>
<path d="M513.6,347.7 Q536.6,355.3 563.2,380.8" opacity="0.85"/>
<path d="M514.6,346.0 Q536.7,353.2 562.2,377.7" opacity="0.55"/>
<path d="M515.7,344.2 Q536.9,351.2 561.3,374.6" opacity="0.85"/>
<path d="M516.7,342.5 Q537.0,349.1 560.3,371.5" opacity="0.55"/>
<path d="M517.8,340.8 Q537.1,347.1 559.4,368.5" opacity="0.85"/>
<path d="M518.8,339.1 Q537.3,345.0 558.5,365.4" opacity="0.55"/>
<path d="M519.9,337.4 Q537.4,343.0 557.5,362.3" opacity="0.85"/>
<path d="M520.9,335.7 Q537.5,340.9 556.6,359.2" opacity="0.55"/>
<path d="M522.0,334.0 Q537.7,338.9 555.6,356.2" opacity="0.85"/>
<path d="M523.0,332.3 Q537.8,336.8 554.7,353.1" opacity="0.55"/>
<path d="M524.1,330.6 Q537.9,334.8 553.8,350.0" opacity="0.85"/>
<path d="M525.2,328.8 Q538.1,332.7 552.8,346.9" opacity="0.55"/>
<path d="M526.2,327.1 Q538.2,330.7 551.9,343.8" opacity="0.85"/>
<path d="M527.3,325.4 Q538.3,328.6 550.9,340.8" opacity="0.55"/>
<path d="M528.3,323.7 Q538.5,326.6 550.0,337.7" opacity="0.85"/>
<path d="M529.4,322.0 Q538.6,324.5 549.0,334.6" opacity="0.55"/>
<path d="M530.4,320.3 Q538.7,322.5 548.1,331.5" opacity="0.85"/>
<path d="M531.5,318.6 Q538.9,320.4 547.2,328.5" opacity="0.55"/>
<path d="M532.5,316.9 Q539.0,318.4 546.2,325.4" opacity="0.85"/>
<path d="M533.6,315.1 Q539.1,316.3 545.3,322.3" opacity="0.55"/>
<path d="M534.6,313.4 Q539.3,314.3 544.3,319.2" opacity="0.85"/>
<path d="M535.7,311.7 Q539.4,312.2 543.4,316.2" opacity="0.55"/>
<path d="M536.7,310.0 Q539.5,310.2 542.4,313.1" opacity="0.85"/>
<path d="M537.8,308.3 Q539.6,308.1 541.5,310.0" opacity="0.55"/>
<path d="M541,311 L550,334 L559,368 L566,390 L553,372 L545,350 L540,328 Z" fill="#140e02" opacity="0.6" filter="url(#b1)"/>
</g>
<path d="M541.7,309.6C544.2,317.3 544.2,318.2 549.3,333.0C554.4,347.8 551.3,336.5 557.0,354.0C562.7,371.5 559.3,363.6 566.5,385.6C573.7,407.6 570.2,400.2 578.5,420.0C586.8,439.8 580.9,425.5 591.5,444.9C602.1,464.3 597.8,458.0 610.2,478.1C622.6,498.2 616.4,488.5 628.8,505.1C641.2,521.7 635.7,515.1 647.5,527.9C659.3,540.7 657.2,537.4 664.1,543.4C671.0,549.4 666.9,545.0 668.3,545.8C669.3,544.7 670.4,543.5 671.4,542.4C670.0,537.6 668.6,532.7 667.2,527.9C660.0,519.7 659.1,521.0 645.4,503.0C631.7,485.0 637.0,493.3 626.0,474.0C615.0,454.7 621.1,463.0 612.3,445.0C603.5,427.0 606.4,435.0 599.5,420.0C592.6,405.0 596.3,412.7 591.5,400.0C586.7,387.3 589.8,397.3 585.0,382.0C580.2,366.7 581.8,370.7 577.0,354.0C572.2,337.3 574.3,344.0 570.6,332.0C566.9,320.0 568.5,324.7 566.0,318.0C563.5,311.3 565.2,314.8 563.0,312.0C560.8,309.2 563.8,310.7 559.5,309.7C555.2,308.7 555.9,309.1 550.0,309.1C544.1,309.1 544.4,309.4 541.7,309.6Z" fill="url(#gBlade)" stroke="#ffa0a0" stroke-width="0.5" stroke-linejoin="round"/>
<path d="M667.2,527.9C660.0,519.7 659.1,521.0 645.4,503.0C631.7,485.0 637.0,493.3 626.0,474.0C615.0,454.7 621.1,463.0 612.3,445.0C603.5,427.0 606.4,435.0 599.5,420.0C592.6,405.0 596.3,412.7 591.5,400.0C586.7,387.3 589.8,397.3 585.0,382.0C580.2,366.7 581.8,370.7 577.0,354.0C572.2,337.3 574.3,344.0 570.6,332.0C566.9,320.0 568.5,324.7 566.0,318.0C563.5,311.3 565.2,314.8 563.0,312.0C560.8,309.2 560.7,310.5 559.5,309.7" fill="none" stroke="#6a5a4a" stroke-width="0.4"/>
<ellipse cx="717.6" cy="452.3" rx="35" ry="77.3" transform="rotate(5 717.6 452.3)" fill="#e06666" stroke="#6b3a2a" stroke-width="0.35"/>
<path d="M753.1,356.8 L762.4,359.5 L742.4,388.4 L738.4,380.4 Z" fill="#c79a1c" stroke="#4a3a10" stroke-width="0.3"/>
<path d="M767.3,373.3 L768.2,376 L752,406 L749.5,404 Z" fill="#f7991c"/>
<ellipse cx="717" cy="451.5" rx="19" ry="41.3" transform="rotate(4 717 451.5)" fill="#ababab"/>
<path d="M762.4,359.5 L767.3,373.3 L735.3,426.7 L731,432 L722,414 C727,414.5 731,413.5 733.6,410.7 L742.4,389.3 Z" fill="#ababab"/>
<path d="M697.8,472.7 L666.7,528.7 L671.1,543.8 L688,515.3 L696.9,497.6 C699,493 701,490.5 704.5,490.2 L712,480 L699,465 Z" fill="#ababab"/>
<path d="M426.4,309.8C435.1,333.7 444.1,358.2 452.8,382.1C455.7,384.0 454.5,386.5 461.7,387.9C468.9,389.3 466.3,389.6 474.3,386.4C482.3,383.2 480.6,384.4 485.6,378.3C490.6,372.2 488.1,371.5 489.4,368.2C480.7,344.8 471.6,320.6 462.9,297.2C450.9,301.4 438.4,305.6 426.4,309.8Z" fill="url(#gGreen)"/>
<g fill="url(#gBlueSide)"><ellipse cx="431.7" cy="267.8" rx="63" ry="41" transform="rotate(-19.5 431.7 267.8)"/>
<path d="M355.9,242.6 L372.3,288.8 L491.0,246.8 L474.7,200.6 Z"/></g>
<ellipse cx="415.3" cy="221.6" rx="63" ry="41" transform="rotate(-19.5 415.3 221.6)" fill="#4a93dc"/>
</svg>
<div class="r" style="left:526.3px;top:95.3px;width:178.7px;height:17.6px;background:#fbfcfc;border:1px solid #b1b7b8"></div>
<svg width="10" height="10" viewBox="0 0 10 10" style="left:531px;top:98.8px"><rect x="0.4" y="0.4" width="8.4" height="8.4" fill="none" stroke="#8d9597" stroke-width="0.6" stroke-dasharray="1.6 0.8"/><circle cx="4.4" cy="4.4" r="2.6" fill="#eaf3fa" stroke="#8aa0b4" stroke-width="0.7"/><path d="M6.2,6.4 L9,9.2" stroke="#6d7577" stroke-width="1.2"/></svg>
<svg width="10" height="10.4" viewBox="0 0 10 10.4" style="left:545.3px;top:98.6px"><circle cx="3.9" cy="3.9" r="3.2" fill="#eaf3fa" stroke="#8aa0b4" stroke-width="0.7"/><circle cx="3.9" cy="3.9" r="1.7" fill="#2a7ac8"/><path d="M3.9,2.6 L3.9,5.2 M2.6,3.9 L5.2,3.9" stroke="#fff" stroke-width="0.6"/><path d="M6.2,6.4 L9.2,9.6" stroke="#8d9597" stroke-width="1.3"/></svg>
<svg width="10" height="10.4" viewBox="0 0 10 10.4" style="left:560.3px;top:98.6px"><circle cx="3.9" cy="3.9" r="3.2" fill="#eaf3fa" stroke="#8aa0b4" stroke-width="0.7"/><circle cx="3.9" cy="3.9" r="1.9" fill="#6ab0e8"/><path d="M2.6,3.9 L5.2,3.9" stroke="#fff" stroke-width="0.7"/><path d="M6.2,6.4 L9.2,9.6" stroke="#8d9597" stroke-width="1.3"/></svg>
<svg width="9.6" height="9.6" viewBox="0 0 9.6 9.6" style="left:575px;top:98.6px"><rect x="0.4" y="0.4" width="8.6" height="8.6" fill="#fbfcfc" stroke="#6d7577" stroke-width="0.7"/><path d="M9,0.4 L9,9 L1,9 Z" fill="#2a7ac8"/><path d="M8.4,1.6 L2.4,8.4" stroke="#bfe0f7" stroke-width="0.7"/></svg>
<svg width="10.5" height="10.5" viewBox="0 0 10.5 10.5" style="left:589px;top:98px"><path d="M0.5,3 L2.8,0.6 L9.4,0.6 L9.4,7 L7,9.4 L0.5,9.4 Z" fill="#f7fafc" stroke="#3b78b5" stroke-width="0.8"/><path d="M0.5,3 L7,3 L7,9.4 M7,3 L9.4,0.6" fill="none" stroke="#3b78b5" stroke-width="0.8"/><path d="M10.4,9 L10.4,10.4 L9,10.4 Z" fill="#4a5051"/></svg>
<svg width="10.5" height="10.5" viewBox="0 0 10.5 10.5" style="left:604.5px;top:98.4px"><path d="M1.4,3.4 L3.6,1.2 L8.8,1.2 L8.8,6 L6.6,8.2 L1.4,8.2 Z" fill="#d9ecfa" stroke="#5d9fd6" stroke-width="0.7"/><path d="M1.4,3.4 L6.6,3.4 L8.8,1.2 L3.6,1.2 Z" fill="#2a7ac8"/><path d="M4,8.2 L6.4,8.2 L6.4,10 L4,10 Z" fill="#8d9597"/><path d="M10.2,9 L10.2,10.4 L8.8,10.4 Z" fill="#4a5051"/></svg>
<svg width="10.5" height="10" viewBox="0 0 10.5 10" style="left:618.3px;top:98.6px"><rect x="0.4" y="0.4" width="8.6" height="6.6" fill="#f1f3f4" stroke="#9aa1a2" stroke-width="0.6"/><rect x="0.4" y="0.4" width="8.6" height="1.6" fill="#9aa1a2"/><path d="M0.4,4 L9,4 M3.4,2 L3.4,7" stroke="#b7bdbe" stroke-width="0.5"/><rect x="4.4" y="5.2" width="5.4" height="4" rx="0.6" fill="#3a4142"/><circle cx="7.1" cy="7.3" r="1.1" fill="#c9cfd0"/></svg>
<svg width="10.5" height="10.5" viewBox="0 0 10.5 10.5" style="left:633px;top:98.4px"><g fill="#c77b3b"><rect x="0.4" y="0.6" width="1.4" height="1.4"/><rect x="3" y="0.2" width="1.2" height="1.2"/><rect x="5.6" y="1" width="1.4" height="1.4"/><rect x="2.2" y="3.2" width="1.4" height="1.4"/><rect x="5" y="4.2" width="1.6" height="1.6"/><rect x="1.6" y="6.2" width="1.4" height="1.4"/><rect x="7" y="6.6" width="1.4" height="1.4"/><rect x="4" y="7.6" width="1.2" height="1.2"/></g><path d="M2.8,1.8 L5.6,4.8 M5.8,5.6 L2.6,6.8" stroke="#d9a06e" stroke-width="0.5"/><path d="M10.2,9 L10.2,10.4 L8.8,10.4 Z" fill="#4a5051"/></svg>
<svg width="10.5" height="10.5" viewBox="0 0 10.5 10.5" style="left:648px;top:98.6px"><rect x="0.4" y="0.4" width="6.4" height="3.4" fill="#fbeee4" stroke="#c98a5a" stroke-width="0.6"/><path d="M6.4,2 L8.8,2 L8.8,5" fill="none" stroke="#6d7577" stroke-width="0.7"/><rect x="4.6" y="5" width="5" height="1.6" fill="#3a4142"/><path d="M7.1,6.6 L7.1,8.4" stroke="#3a4142" stroke-width="0.8"/><ellipse cx="7.1" cy="9" rx="2.4" ry="0.9" fill="#3a4142"/></svg>
<svg width="10.5" height="9.5" viewBox="0 0 10.5 9.5" style="left:662.8px;top:99px"><path d="M0.6,2.4 L2.4,0.6 L9.6,0.6 L9.6,6.6 L7.8,8.6 L0.6,8.6 Z" fill="#eceeef" stroke="#d5d9da" stroke-width="0.6"/><path d="M0.6,2.4 L7.8,2.4 L7.8,8.6 M7.8,2.4 L9.6,0.6" fill="none" stroke="#d5d9da" stroke-width="0.6"/></svg>
<svg width="10.5" height="10" viewBox="0 0 10.5 10" style="left:677.5px;top:98.8px"><path d="M1.2,1 L4.4,5 L1.4,9 M4.4,5 L9,5" fill="none" stroke="#2a7ac8" stroke-width="1.1"/><circle cx="1.4" cy="1.2" r="1.1" fill="#2a7ac8"/><circle cx="1.6" cy="8.8" r="1.1" fill="#49a92b"/><circle cx="8.8" cy="5" r="1.3" fill="#e04a4a"/></svg>
<svg width="11.5" height="11" viewBox="0 0 11.5 11" style="left:690.5px;top:98.3px"><rect x="0.8" y="0.4" width="7.4" height="5.4" fill="#2a7ac8" stroke="#1f5f9d" stroke-width="0.5"/><rect x="2.4" y="1.8" width="4.2" height="2.6" fill="#8cc6f0"/><path d="M2,6.6 L7,6.6 L7,7.8 L2,7.8 Z" fill="#6d7577"/><path d="M6.6,6 L10,9.4 L8.8,9.8 L8.2,8.4 Z" fill="#4a5051"/><path d="M11.2,9.4 L11.2,10.8 L9.8,10.8 Z" fill="#4a5051"/></svg>
<div class="r" style="left:875.5px;top:142.5px;width:204px;height:431px;background:#eff1f2;border-radius:4px 4px 5px 5px;box-shadow:0 7px 26px rgba(0,0,0,0.30),0 0 2.5px rgba(0,0,0,0.35);"></div>
<div class="r" style="left:875.5px;top:142.5px;width:204px;height:16.5px;background:#e4e7e8;border-radius:4px 4px 0 0;"></div>
<div class="t" style="left:954px;top:146.8px;font-size:6.6px;color:#2d3334;">Play Simulation</div>
<svg width="5" height="5" style="left:1068.2px;top:148.2px" viewBox="0 0 5 5"><path d="M0.4,0.4 L4.6,4.6 M4.6,0.4 L0.4,4.6" stroke="#3a4142" stroke-width="0.9" fill="none"/></svg>
<div class="t" style="left:880.5px;top:164px;font-size:6.5px;color:#30373a;">File</div>
<div class="t" style="left:900.5px;top:164px;font-size:6.5px;color:#30373a;">View</div>
<div class="r" style="left:876.5px;top:176px;width:202.5px;height:12.8px;background:#c7cbcc;"></div>
<div class="t" style="left:892.5px;top:179px;font-size:6.3px;color:#1f2526;">CL Data</div>
<svg width="8" height="5" style="left:881px;top:181px" viewBox="0 0 8 5"><path d="M0.5,0.5 L7,0.5 L3.75,4.5 Z" fill="#1f2526"/></svg>
<div class="r" style="left:877px;top:191px;width:200.5px;height:211.5px;background:#fff;border:1px solid #d9dddd;"></div>
<div class="r" style="left:877px;top:202.5px;width:200.5px;height:1px;background:#e1e4e5;"></div>
<div class="r" style="left:916px;top:191.5px;width:1px;height:11px;background:#e1e4e5;"></div>
<div class="r" style="left:878px;top:202.5px;width:191.5px;height:192px;overflow:hidden;">
<div class="t" style="left:41.5px;top:2.65px;font-size:6.55px;letter-spacing:-0.210px;color:#2d3436;">-0.8633649451, -0.5045799951, 0.0000000000</div>
<div class="t" style="left:2.2px;top:12.22px;font-size:6.55px;letter-spacing:-0.234px;color:#2d3436;">40129</div>
<div class="t" style="left:41.5px;top:12.22px;font-size:6.55px;letter-spacing:-0.212px;color:#2d3436;">GOTO / -28.2658055001, -11.4588760911, 97.1084008789</div>
<div class="t" style="left:41.5px;top:21.79px;font-size:6.55px;letter-spacing:-0.210px;color:#2d3436;">-0.9267423125, -0.3756975994, 0.0000000000</div>
<div class="t" style="left:2.2px;top:31.36px;font-size:6.55px;letter-spacing:-0.234px;color:#2d3436;">40130</div>
<div class="t" style="left:41.5px;top:31.36px;font-size:6.55px;letter-spacing:-0.213px;color:#2d3436;">GOTO / -29.6158612875, -7.2915625610, 92.3106002808</div>
<div class="t" style="left:41.5px;top:40.93px;font-size:6.55px;letter-spacing:-0.210px;color:#2d3436;">-0.9710034301, -0.2390655531, 0.0000000000</div>
<div class="t" style="left:2.2px;top:50.50px;font-size:6.55px;letter-spacing:-0.234px;color:#2d3436;">40131</div>
<div class="t" style="left:41.5px;top:50.50px;font-size:6.55px;letter-spacing:-0.213px;color:#2d3436;">GOTO / -30.3549399646, -2.9738433258, 87.5127919197</div>
<div class="t" style="left:41.5px;top:60.07px;font-size:6.55px;letter-spacing:-0.210px;color:#2d3436;">-0.9952353079, -0.0975022148, 0.0000000000</div>
<div class="t" style="left:2.2px;top:69.64px;font-size:6.55px;letter-spacing:-0.234px;color:#2d3436;">40132</div>
<div class="t" style="left:41.5px;top:69.64px;font-size:6.55px;letter-spacing:-0.214px;color:#2d3436;">GOTO / -30.4678762876, 1.4052184541, 82.7149836273</div>
<div class="t" style="left:41.5px;top:79.21px;font-size:6.55px;letter-spacing:-0.211px;color:#2d3436;">-0.9989381061, 0.0460723369, 0.0000000000</div>
<div class="t" style="left:2.2px;top:88.78px;font-size:6.55px;letter-spacing:-0.234px;color:#2d3436;">40133</div>
<div class="t" style="left:41.5px;top:88.78px;font-size:6.55px;letter-spacing:-0.214px;color:#2d3436;">GOTO / -29.9523406780, 5.7552942833, 77.9171752930</div>
<div class="t" style="left:41.5px;top:98.35px;font-size:6.55px;letter-spacing:-0.211px;color:#2d3436;">-0.9820354457, 0.1886965379, 0.0000000000</div>
<div class="t" style="left:2.2px;top:107.92px;font-size:6.55px;letter-spacing:-0.234px;color:#2d3436;">40134</div>
<div class="t" style="left:41.5px;top:107.92px;font-size:6.55px;letter-spacing:-0.213px;color:#2d3436;">GOTO / -29.9319257965, 5.8605411431, 77.7131195068</div>
<div class="t" style="left:41.5px;top:117.49px;font-size:6.55px;letter-spacing:-0.209px;color:#2d3436;">-0.9813661111, 0.1921472247, 0.0000000000</div>
<div class="t" style="left:2.2px;top:127.06px;font-size:6.55px;letter-spacing:-0.234px;color:#2d3436;">40135</div>
<div class="t" style="left:41.5px;top:127.06px;font-size:6.55px;letter-spacing:-0.214px;color:#2d3436;">GOTO / -29.9219172575, 5.9114289318, 77.4885253906</div>
<div class="t" style="left:41.5px;top:136.63px;font-size:6.55px;letter-spacing:-0.211px;color:#2d3436;">-0.9810379651, 0.1938156623, 0.0000000000</div>
<div class="t" style="left:2.2px;top:146.20px;font-size:6.55px;letter-spacing:-0.234px;color:#2d3436;">40136</div>
<div class="t" style="left:41.5px;top:146.20px;font-size:6.55px;letter-spacing:-0.214px;color:#2d3436;">GOTO / -29.9232511914, 5.9046729390, 77.2581329346</div>
<div class="t" style="left:41.5px;top:155.77px;font-size:6.55px;letter-spacing:-0.211px;color:#2d3436;">-0.9810817003, 0.1935941563, 0.0000000000</div>
<div class="t" style="left:2.2px;top:165.34px;font-size:6.55px;letter-spacing:-0.234px;color:#2d3436;">40137</div>
<div class="t" style="left:41.5px;top:165.34px;font-size:6.55px;letter-spacing:-0.214px;color:#2d3436;">GOTO / -29.9358022171, 5.8407080048, 77.0370330811</div>
<div class="t" style="left:41.5px;top:174.91px;font-size:6.55px;letter-spacing:-0.211px;color:#2d3436;">-0.9814932058, 0.1914969635, 0.0000000000</div>
<div class="r" style="left:0;top:182.73px;width:192px;height:9.4px;background:#b5e0f8;"></div>
<div class="t" style="left:2.2px;top:184.48px;font-size:6.55px;letter-spacing:-0.234px;color:#2d3436;">40138</div>
<div class="t" style="left:41.5px;top:184.48px;font-size:6.55px;letter-spacing:-0.214px;color:#2d3436;">GOTO / -29.9584013147, 5.7236627300, 76.8397521973</div>
</div>
<div class="r" style="left:1069.5px;top:202.5px;width:7.5px;height:192px;background:#e3e6e7;"></div>
<div class="r" style="left:1069.5px;top:333px;width:7.5px;height:12px;background:#fff;border:1px solid #cfd3d4;"></div>
<svg width="8" height="200" style="left:1069.5px;top:202.5px" viewBox="0 0 8 200"><path d="M2,5.2 L3.75,3 L5.5,5.2 Z" fill="#8a9091"/><path d="M2,186.5 L3.75,188.7 L5.5,186.5 Z" fill="#5a6061"/></svg>
<div class="r" style="left:878px;top:395.5px;width:199px;height:6.5px;background:#eceeef;"></div>
<div class="r" style="left:885px;top:396.3px;width:131px;height:5px;background:#fff;border:1px solid #d9dddd;"></div>
<svg width="200" height="7" style="left:878px;top:395.5px" viewBox="0 0 200 7"><path d="M3.6,2 L2,3.4 L3.6,4.8 Z" fill="#8a9091"/><path d="M186.5,2 L188.1,3.4 L186.5,4.8 Z" fill="#8a9091"/></svg>
<div class="r" style="left:876.5px;top:404.3px;width:202.5px;height:13.6px;background:#d4d8d9;"></div>
<div class="t" style="left:892.5px;top:407.5px;font-size:6.3px;color:#1f2526;">Sequence List</div>
<svg width="5" height="8" style="left:883.5px;top:407.5px" viewBox="0 0 5 8"><path d="M0.6,0.6 L4.2,3.8 L0.6,7 Z" fill="#1f2526"/></svg>
<div class="r" style="left:876.5px;top:418.85px;width:202.5px;height:13.6px;background:#d4d8d9;"></div>
<div class="t" style="left:892.5px;top:422.05px;font-size:6.3px;color:#1f2526;">Tool List</div>
<svg width="5" height="8" style="left:883.5px;top:422.1px" viewBox="0 0 5 8"><path d="M0.6,0.6 L4.2,3.8 L0.6,7 Z" fill="#1f2526"/></svg>
<div class="r" style="left:876.5px;top:433.40000000000003px;width:202.5px;height:13.6px;background:#d4d8d9;"></div>
<div class="t" style="left:892.5px;top:436.6px;font-size:6.3px;color:#1f2526;">NC Information</div>
<svg width="5" height="8" style="left:883.5px;top:436.6px" viewBox="0 0 5 8"><path d="M0.6,0.6 L4.2,3.8 L0.6,7 Z" fill="#1f2526"/></svg>
<div class="r" style="left:876.5px;top:447.95000000000005px;width:202.5px;height:13.6px;background:#d4d8d9;"></div>
<div class="t" style="left:892.5px;top:451.15000000000003px;font-size:6.3px;color:#1f2526;">Collision Report</div>
<svg width="5" height="8" style="left:883.5px;top:451.2px" viewBox="0 0 5 8"><path d="M0.6,0.6 L4.2,3.8 L0.6,7 Z" fill="#1f2526"/></svg>
<div class="r" style="left:876.5px;top:462.5px;width:202.5px;height:13.6px;background:#d4d8d9;"></div>
<div class="t" style="left:892.5px;top:465.7px;font-size:6.3px;color:#1f2526;">Gouge Report</div>
<svg width="5" height="8" style="left:883.5px;top:465.7px" viewBox="0 0 5 8"><path d="M0.6,0.6 L4.2,3.8 L0.6,7 Z" fill="#1f2526"/></svg>
<div class="r" style="left:876.5px;top:477px;width:202.5px;height:32.5px;background:#eef0f1;"></div>
<div class="r" style="left:878.5px;top:480px;width:58.5px;height:12.3px;background:#e6e9ea;border:1px solid #dfe3e4;"></div>
<div class="r" style="left:938.6px;top:480px;width:78.6px;height:12.3px;background:#fafbfb;border:1px solid #c9cecf;"></div>
<div class="r" style="left:1019px;top:480px;width:57.6px;height:12.3px;background:#e3eff8;border:1px dotted #b9d4ea;"></div>
<div class="r" style="left:878.5px;top:494.2px;width:58.5px;height:13px;background:#e6e9ea;border:1px solid #dfe3e4;"></div>
<div class="r" style="left:938.6px;top:494.2px;width:38.6px;height:13px;background:#e6e9ea;border:1px solid #dfe3e4;"></div>
<div class="r" style="left:979px;top:494.2px;width:38.2px;height:13px;background:#e6e9ea;border:1px solid #dfe3e4;"></div>
<div class="r" style="left:1019px;top:494.2px;width:57.6px;height:13px;background:#e6e9ea;border:1px dotted #d5d9da;"></div>
<div class="r" style="left:974.5px;top:483.3px;width:5.6px;height:5.6px;background:#343b3c;"></div>
<svg width="205" height="32" style="left:876.5px;top:478px" viewBox="0 0 205 32">
<path d="M172.2,5.7 L176.6,8.2 L172.2,10.7 Z" fill="#6a7071"/>
<path d="M30.6,5.8 a2.5,2.5 0 1 1 -2.2,1.3" fill="none" stroke="#a9afb0" stroke-width="0.7"/><path d="M29.2,4.4 L31.2,5.8 L29.2,7 Z" fill="#a9afb0"/>
<g fill="#b3b8b9"><path d="M27.6,22.2 l3,-2.2 v4.4 z M30.8,22.2 l3,-2.2 v4.4 z"/><rect x="26.6" y="20" width="0.8" height="4.4"/>
<path d="M78.5,22.2 l3,-2.2 v4.4 z M82,22.2 l3,-2.2 v4.4 z"/>
<path d="M120.2,22.2 l-3,-2.2 v4.4 z M123.7,22.2 l-3,-2.2 v4.4 z"/>
<path d="M170,22.2 l-3,-2.2 v4.4 z M173.2,22.2 l-3,-2.2 v4.4 z"/><rect x="173.6" y="20" width="0.8" height="4.4"/></g>
</svg>
<div class="r" style="left:876.5px;top:509.3px;width:202.5px;height:1px;background:#dfe3e4;"></div>
<div class="t" style="left:878.5px;top:516.2px;font-size:6.3px;color:#3a4142;">Display Speed</div>
<div class="r" style="left:878.5px;top:532.2px;width:197.5px;height:1.2px;background:#b9bebf;"></div>
<div class="r" style="left:917.2px;top:527.6px;width:4.6px;height:11px;background:#f7f8f8;border:1px solid #9da3a4;"></div>
<div class="t" style="left:899.5px;top:543px;font-size:6.3px;color:#3a4142;">Slow</div>
<div class="t" style="left:1043px;top:543px;font-size:6.3px;color:#3a4142;">Fast</div>
<div class="r" style="left:916.3px;top:538.6px;width:113.8px;height:15.8px;background:#fff;border:1px solid #cde4f3;box-shadow:1px 1.5px 2px rgba(0,0,0,0.3);"></div>
<div class="t" style="left:921px;top:543px;font-size:6.75px;color:#2d3334;">Control the speed of the simulation.</div>
<div class="r" style="left:876.5px;top:553.1px;width:202.5px;height:1px;background:#dcdfe0;"></div>
<div class="r" style="left:963.5px;top:558.4px;width:27px;height:12.2px;background:#fafbfb;border:1px solid #c3c9ca;"></div>
<div class="t" style="left:969px;top:560.8px;font-size:6.9px;color:#2d3334;letter-spacing:-0.1px;">Close</div>
</div>
</body></html>
